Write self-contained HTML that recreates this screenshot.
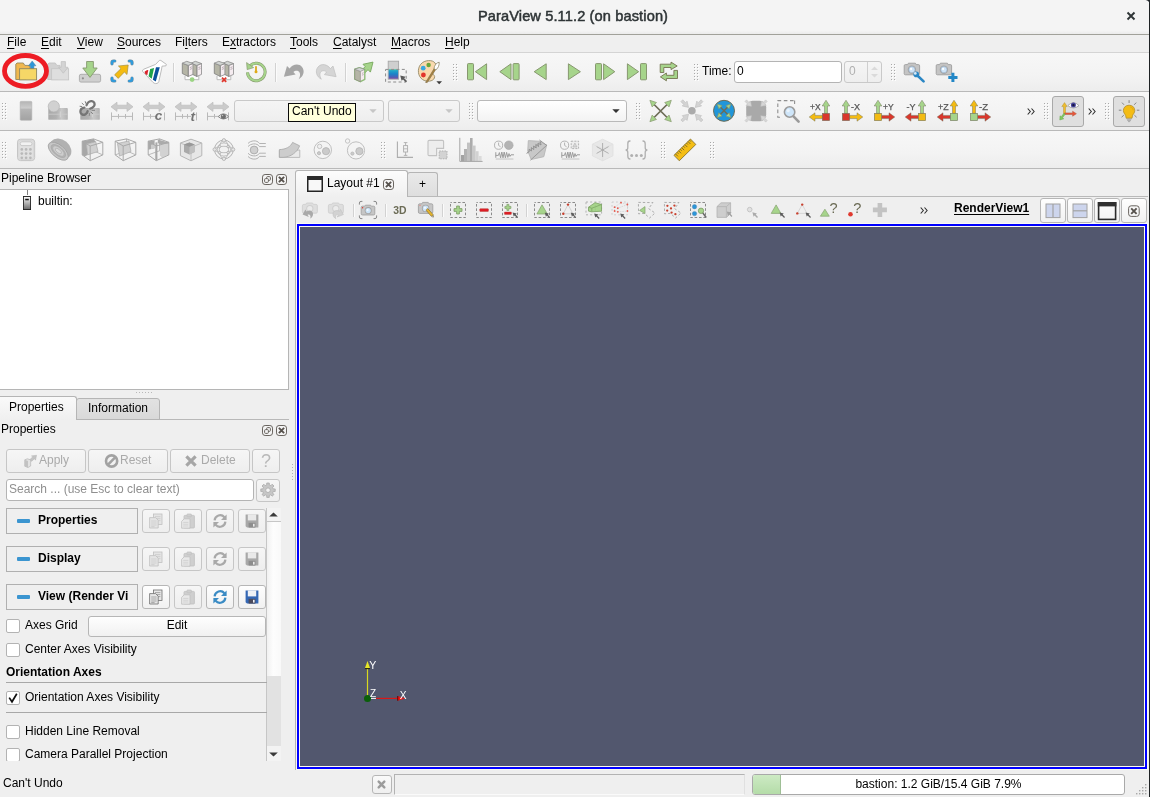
<!DOCTYPE html>
<html><head><meta charset="utf-8"><title>ParaView 5.11.2 (on bastion)</title>
<style>
*{box-sizing:border-box}
html,body{margin:0;padding:0}
body{width:1150px;height:797px;position:relative;overflow:hidden;background:#efefef;font:12px "Liberation Sans",sans-serif;color:#000}
.abs,.ic,.sep,.t,.btn,.cb,.inp,.tb,.chk,.ln{position:absolute}
.t{white-space:nowrap;line-height:14px}
.ic{overflow:visible}
.sep{width:1px;background:#d2d2d2;box-shadow:1px 0 0 #fbfbfb}
.ln{height:1px;background:#b9b9b9}
.tb{left:0;width:1149px;background:linear-gradient(#f7f7f7,#f3f3f3 60%,#ededed)}
.btn{border:1px solid #b6b6b6;border-radius:3px;background:linear-gradient(#fefefe,#f1f1f1)}
.btn.dis{border-color:#c6c6c6;background:linear-gradient(#f6f6f6,#eeeeee);color:#a9a9a9}
.cb{border:1px solid #b9b9b9;border-radius:3px;background:linear-gradient(#fdfdfd,#f0f0f0)}
.cb.dis{border-color:#c9c9c9;background:linear-gradient(#f5f5f5,#eeeeee)}
.inp{border:1px solid #b4b4b4;border-radius:3px;background:#fff}
.chk{width:14px;height:14px;border:1px solid #b3b3b3;border-radius:2px;background:#fff}
u{text-decoration:underline;text-underline-offset:2px;text-decoration-thickness:1px}
#root{position:absolute;left:0;top:0;width:1150px;height:797px;will-change:transform}
</style></head><body><div id="root">

<div class="abs" style="left:0;top:0;width:1150px;height:34px;background:linear-gradient(#f4f4f4,#f4f4f4 90%,#ebebeb)"></div>
<div class="ln" style="left:0;top:34px;width:1150px;background:#a1a19a"></div>
<div class="t" id="ttl" style="left:0;width:1146px;top:7px;text-align:center;font:14.6px/18px 'Liberation Sans',sans-serif;letter-spacing:0.12px;-webkit-text-stroke:0.5px #2e3436;color:#2e3436">ParaView 5.11.2 (on bastion)</div>
<svg class="ic" style="left:1126px;top:11px" width="10" height="10" viewBox="0 0 10 10"><path d="M1.5 1.5L8.5 8.5M8.5 1.5L1.5 8.5" stroke="#2e3436" stroke-width="1.9" fill="none"/></svg>
<div class="abs" style="left:1149px;top:0;width:1px;height:797px;background:#1e2224"></div>
<svg class="ic" style="left:1145px;top:0" width="5" height="5" viewBox="0 0 5 5"><path d="M0.6 0H5V4.6C4.6 2 3 0.4 0.6 0Z" fill="#23282b"/></svg>
<div class="abs" style="left:0;top:35px;width:1149px;height:17px;background:#efefef"></div>
<div class="t" style="left:7px;top:35px"><u>F</u>ile</div>
<div class="t" style="left:41px;top:35px"><u>E</u>dit</div>
<div class="t" style="left:77px;top:35px"><u>V</u>iew</div>
<div class="t" style="left:117px;top:35px"><u>S</u>ources</div>
<div class="t" style="left:175px;top:35px">Fi<u>l</u>ters</div>
<div class="t" style="left:222px;top:35px">E<u>x</u>tractors</div>
<div class="t" style="left:290px;top:35px"><u>T</u>ools</div>
<div class="t" style="left:333px;top:35px"><u>C</u>atalyst</div>
<div class="t" style="left:391px;top:35px"><u>M</u>acros</div>
<div class="t" style="left:445px;top:35px"><u>H</u>elp</div>
<div class="ln" style="left:0;top:52px;width:1149px;background:#d4d4d4"></div><div class="tb" style="top:53px;height:38px"></div><div class="ln" style="left:0;top:91px;width:1149px"></div>
<div class="tb" style="top:92px;height:38px"></div><div class="ln" style="left:0;top:130px;width:1149px"></div>
<div class="tb" style="top:131px;height:37px"></div><div class="ln" style="left:0;top:168px;width:1149px"></div>
<svg class="ic" style="left:15px;top:59px" width="24" height="24" viewBox="0 0 24 24" ><path d="M0.8 20.5V5.2L2 4H8.3L9.8 6.4H15V12H11V20.5Z" fill="#f0b84f" stroke="#96865c" stroke-width="0.9"/>
<path d="M17.2 2L20.9 6.8H18.9V10H15.5V6.8H13.5Z" fill="#2d96d8" stroke="#4a83a8" stroke-width="0.5"/>
<rect x="4.6" y="9.7" width="17" height="11.2" fill="#f6d767" stroke="#8d8660" stroke-width="0.9"/></svg>
<svg class="ic" style="left:47px;top:59px" width="24" height="24" viewBox="0 0 24 24" ><path d="M0.8 20.5V5.2L2 4H8.3L9.8 6.4H13V12H11V20.5Z" fill="#d2d2d2" stroke="#c4c4c4" stroke-width="0.9"/>
<rect x="4.6" y="9.7" width="17" height="11.2" fill="#dedede" stroke="#c6c6c6" stroke-width="0.9"/>
<path d="M14.2 2.6H18.4V8.3H21L16.3 14.2L11.6 8.3H14.2Z" fill="#d4d4d4" stroke="#c2c2c2" stroke-width="0.8"/></svg>
<svg class="ic" style="left:78px;top:59px" width="24" height="24" viewBox="0 0 24 24" ><rect x="1.4" y="15.3" width="21.2" height="7.8" rx="1.6" fill="#cfcfcf" stroke="#a9a9a9" stroke-width="0.9"/>
<circle cx="4.9" cy="19.3" r="1.1" fill="#8e8e8e"/>
<path d="M8.6 2.5H15.4V9H19.2L12 18.4L4.8 9H8.6Z" fill="#a6d48b" stroke="#87986f" stroke-width="0.9"/></svg>
<svg class="ic" style="left:110px;top:59px" width="24" height="24" viewBox="0 0 24 24" ><g fill="none" stroke="#6f8ea0" stroke-width="3.2" stroke-linecap="round" stroke-linejoin="round"><path d="M2 4.8V3.4Q2 2 3.4 2H4.8M19.2 2H20.6Q22 2 22 3.4V4.8M22 19.2V20.6Q22 22 20.6 22H19.2M4.8 22H3.4Q2 22 2 20.6V19.2"/></g><g fill="none" stroke="#2f9bdc" stroke-width="2.2" stroke-linecap="round" stroke-linejoin="round"><path d="M2 4.8V3.4Q2 2 3.4 2H4.8M19.2 2H20.6Q22 2 22 3.4V4.8M22 19.2V20.6Q22 22 20.6 22H19.2M4.8 22H3.4Q2 22 2 20.6V19.2"/></g>
<path d="M18.2 6L17 15.5L14.4 13L8.2 19.4L4.6 15.8L11 9.6L8.4 7Z" fill="#f4bb12" stroke="#a89040" stroke-width="0.7"/></svg>
<svg class="ic" style="left:142px;top:59px" width="24" height="24" viewBox="0 0 24 24" ><path d="M0.4 12.2Q0.2 10.8 1.8 10.2L13.6 5.4L17.4 1.4L18.8 1.4L24.4 5.4L24 6.8L20 7.2L19.6 10L16.8 22.6Q16 25 13.6 24.6Q12 24.4 10.8 23.2Z" fill="#fff" stroke="#b5b5b5" stroke-width="0.9" stroke-linejoin="round"/>
<path d="M2.6 12.7Q4.6 10.6 6.3 11L5.3 15.9L4.2 15.7Q2.6 14.6 2.6 12.7Z" fill="#d8232a"/>
<path d="M8.2 10L12.1 9L9.7 19.8L6.5 17.3Z" fill="#1fa24a"/>
<path d="M14 8.3H17.8L13.8 22.6L10.8 20.7Z" fill="#0b509c"/></svg>
<div class="sep" style="left:173px;top:63px;height:19px"></div>
<svg class="ic" style="left:180px;top:59px" width="24" height="24" viewBox="0 0 24 24" ><path d="M5 17V20.7H18.8V17" fill="#fdfdfd" stroke="#b5b5b5" stroke-width="0.9"/><path d="M16.8 6.4L21.5 4.5V15.4L16.8 17.5Z" fill="#f5ecf0" stroke="#8a8a8a" stroke-width="0.8" stroke-linejoin="round"/><path d="M10.9 4.2L16.8 6.4V17.5L10.9 14.5Z" fill="#b5b5a6" stroke="#7c7c7c" stroke-width="0.8" stroke-linejoin="round"/><path d="M10.9 4.2L15.4 2.3L21.5 4.5L16.8 6.4Z" fill="#d3d6d3" stroke="#8a8a8a" stroke-width="0.8" stroke-linejoin="round"/><path d="M18.5 8.6L20.5 7.8M18.5 10.4L20.5 9.6" stroke="#a89aa2" stroke-width="0.8"/><path d="M8.2 6.4L12.9 4.5V15.4L8.2 17.5Z" fill="#f5ecf0" stroke="#8a8a8a" stroke-width="0.8" stroke-linejoin="round"/><path d="M2.3 4.2L8.2 6.4V17.5L2.3 14.5Z" fill="#b5b5a6" stroke="#7c7c7c" stroke-width="0.8" stroke-linejoin="round"/><path d="M2.3 4.2L6.8 2.3L12.9 4.5L8.2 6.4Z" fill="#d3d6d3" stroke="#8a8a8a" stroke-width="0.8" stroke-linejoin="round"/><path d="M9.9 8.6L11.9 7.8M9.9 10.4L11.9 9.6" stroke="#a89aa2" stroke-width="0.8"/><circle cx="12.1" cy="20.6" r="2.4" fill="#9bd484"/></svg>
<svg class="ic" style="left:212px;top:59px" width="24" height="24" viewBox="0 0 24 24" ><path d="M5 17V20.7H18.8V17" fill="#fdfdfd" stroke="#b5b5b5" stroke-width="0.9"/><path d="M16.8 6.4L21.5 4.5V15.4L16.8 17.5Z" fill="#f5ecf0" stroke="#8a8a8a" stroke-width="0.8" stroke-linejoin="round"/><path d="M10.9 4.2L16.8 6.4V17.5L10.9 14.5Z" fill="#b5b5a6" stroke="#7c7c7c" stroke-width="0.8" stroke-linejoin="round"/><path d="M10.9 4.2L15.4 2.3L21.5 4.5L16.8 6.4Z" fill="#d3d6d3" stroke="#8a8a8a" stroke-width="0.8" stroke-linejoin="round"/><path d="M18.5 8.6L20.5 7.8M18.5 10.4L20.5 9.6" stroke="#a89aa2" stroke-width="0.8"/><path d="M8.2 6.4L12.9 4.5V15.4L8.2 17.5Z" fill="#f5ecf0" stroke="#8a8a8a" stroke-width="0.8" stroke-linejoin="round"/><path d="M2.3 4.2L8.2 6.4V17.5L2.3 14.5Z" fill="#b5b5a6" stroke="#7c7c7c" stroke-width="0.8" stroke-linejoin="round"/><path d="M2.3 4.2L6.8 2.3L12.9 4.5L8.2 6.4Z" fill="#d3d6d3" stroke="#8a8a8a" stroke-width="0.8" stroke-linejoin="round"/><path d="M9.9 8.6L11.9 7.8M9.9 10.4L11.9 9.6" stroke="#a89aa2" stroke-width="0.8"/><path d="M10 18.6L14.2 22.8M14.2 18.6L10 22.8" stroke="#e0392f" stroke-width="1.8"/></svg>
<svg class="ic" style="left:244px;top:59px" width="24" height="24" viewBox="0 0 24 24" ><path d="M5.9 6.9A8.8 8.8 0 1 1 3.5 13.4" fill="none" stroke="#87986f" stroke-width="3"/><path d="M5.9 6.9A8.8 8.8 0 1 1 3.5 13.4" fill="none" stroke="#a6d48b" stroke-width="2"/>
<path d="M2.6 3.6L3.2 10.6L9.6 8.6Z" fill="#a6d48b" stroke="#87986f" stroke-width="0.7"/>
<path d="M12 7.8V12.2" stroke="#d9a514" stroke-width="1.7" stroke-linecap="round"/><circle cx="12" cy="12.8" r="1.5" fill="#e0aa18"/></svg>
<div class="sep" style="left:275px;top:63px;height:19px"></div>
<svg class="ic" style="left:282px;top:59px" width="24" height="24" viewBox="0 0 24 24" ><path d="M1.9 17.7L5 7L7.6 9.6C10.5 5.5 16.5 3.8 20 8C23.2 12 21.6 17.6 16.7 20.2C18.6 17 18.6 13.6 16.4 12.2C14.8 11.2 12.6 11.8 11.4 13L13.6 15.6Z" fill="#a6a6a6"/></svg>
<svg class="ic" style="left:314px;top:59px" width="24" height="24" viewBox="0 0 24 24" ><g transform="translate(24 0) scale(-1 1)"><path d="M1.9 17.7L5 7L7.6 9.6C10.5 5.5 16.5 3.8 20 8C23.2 12 21.6 17.6 16.7 20.2C18.6 17 18.6 13.6 16.4 12.2C14.8 11.2 12.6 11.8 11.4 13L13.6 15.6Z" fill="#d5d5d5" stroke="#bfbfbf" stroke-width="0.7"/></g></svg>
<div class="sep" style="left:345px;top:63px;height:19px"></div>
<svg class="ic" style="left:352px;top:59px" width="24" height="24" viewBox="0 0 24 24" ><path d="M11 5.3L21 3.1L18.4 13.1L16 10.6L12.6 14.2L9.6 11.2L13.2 7.6Z" fill="#a6d48b" stroke="#7fae66" stroke-width="1" stroke-linejoin="round"/>
<path d="M2.8 10.2L7.4 8.7L12.8 10.4V20.4L8.4 22.7L2.8 20.2Z" fill="#f4eaef" stroke="#8fbc78" stroke-width="1.4" stroke-linejoin="round"/>
<path d="M2.8 10.2L8.4 12.4V22.7L2.8 20.2Z" fill="#b5b5a6" stroke="#86867c" stroke-width="0.6"/><path d="M2.8 10.2L7.4 8.7L12.8 10.4L8.4 12.4Z" fill="#d3d6d3" stroke="#8a8a8a" stroke-width="0.6"/>
<path d="M10 14.4L11.6 13.7M10 16.2L11.6 15.5" stroke="#a89aa2" stroke-width="0.7"/></svg>
<svg class="ic" style="left:384px;top:59px" width="24" height="24" viewBox="0 0 24 24" ><defs><linearGradient id="cbg" x1="0" y1="0" x2="0" y2="1"><stop offset="0" stop-color="#58c9a8"/><stop offset="0.15" stop-color="#22a6c8"/><stop offset="0.5" stop-color="#1b83c8"/><stop offset="0.8" stop-color="#4a62b8"/><stop offset="1" stop-color="#7a4fa0"/></linearGradient></defs>
<rect x="4.2" y="2.2" width="10.4" height="18" fill="#cfcfcf" stroke="#a7a7a7" stroke-width="0.9"/>
<rect x="4.7" y="10.2" width="9.4" height="9.6" fill="url(#cbg)"/>
<path d="M1.6 10.4H22.2V23H1.6Z" fill="none" stroke="#8c8c8c" stroke-width="1" stroke-dasharray="3 2.4"/>
<path d="M16.2 16.4L21.6 17.8L20.2 19.2L23 22L21.8 23.2L19 20.4L17.6 21.8Z" fill="#5a5a5a"/></svg>
<svg class="ic" style="left:416px;top:59px" width="24" height="24" viewBox="0 0 24 24" ><path d="M12.6 1.6C18.4 1.2 21.4 5.4 19.6 9.6C18.4 12 16.6 12.4 16.8 14.4C17.2 16.2 19.4 16.4 18.4 19C17 22.6 10.6 23.2 6.6 20.6C1.6 17.2 1.2 9.8 4.6 5.4C6.6 2.8 9.6 1.8 12.6 1.6Z" fill="#f9d9ad" stroke="#958a68" stroke-width="0.9"/>
<circle cx="7.2" cy="9.2" r="2.4" fill="#3ba7e0"/><circle cx="12.6" cy="6" r="2.2" fill="#6aa63a"/><circle cx="7.4" cy="16" r="2.4" fill="#e3342c"/>
<path d="M9.6 23.4L18.6 8.8L20.2 9.8L11.2 23.6Z" fill="#a8823e" stroke="#7a6a44" stroke-width="0.6"/>
<path d="M18 9.6C18.2 6.4 20.6 3.6 23.2 3.2C23.4 6 22.2 9.6 19.8 10.8Z" fill="#fff" stroke="#8d8668" stroke-width="0.8"/>
<path d="M20.4 22.2H26L23.2 25.2Z" fill="#3a3a3a"/></svg>
<svg class="ic" style="left:453px;top:64px" width="6" height="18"><rect x="1" y="1" width="1" height="1" fill="#ffffff"/><rect x="0" y="0" width="1" height="1" fill="#a9a9a9"/><rect x="4" y="1" width="1" height="1" fill="#ffffff"/><rect x="3" y="0" width="1" height="1" fill="#a9a9a9"/><rect x="1" y="4" width="1" height="1" fill="#ffffff"/><rect x="0" y="3" width="1" height="1" fill="#a9a9a9"/><rect x="4" y="4" width="1" height="1" fill="#ffffff"/><rect x="3" y="3" width="1" height="1" fill="#a9a9a9"/><rect x="1" y="7" width="1" height="1" fill="#ffffff"/><rect x="0" y="6" width="1" height="1" fill="#a9a9a9"/><rect x="4" y="7" width="1" height="1" fill="#ffffff"/><rect x="3" y="6" width="1" height="1" fill="#a9a9a9"/><rect x="1" y="10" width="1" height="1" fill="#ffffff"/><rect x="0" y="9" width="1" height="1" fill="#a9a9a9"/><rect x="4" y="10" width="1" height="1" fill="#ffffff"/><rect x="3" y="9" width="1" height="1" fill="#a9a9a9"/><rect x="1" y="13" width="1" height="1" fill="#ffffff"/><rect x="0" y="12" width="1" height="1" fill="#a9a9a9"/><rect x="4" y="13" width="1" height="1" fill="#ffffff"/><rect x="3" y="12" width="1" height="1" fill="#a9a9a9"/><rect x="1" y="16" width="1" height="1" fill="#ffffff"/><rect x="0" y="15" width="1" height="1" fill="#a9a9a9"/><rect x="4" y="16" width="1" height="1" fill="#ffffff"/><rect x="3" y="15" width="1" height="1" fill="#a9a9a9"/></svg>
<svg class="ic" style="left:465px;top:59px" width="24" height="24" viewBox="0 0 24 24" ><rect x="2.5" y="4.6" width="6" height="16.2" rx="0.8" fill="#a6d48b" stroke="#87986f" stroke-width="1"/><path d="M21.6 4.8V20.6L10.4 12.7Z" fill="#a6d48b" stroke="#87986f" stroke-width="1" stroke-linejoin="round"/></svg>
<svg class="ic" style="left:497px;top:59px" width="24" height="24" viewBox="0 0 24 24" ><g transform="translate(1.6 0)"><rect x="14.5" y="4.6" width="6" height="16.2" rx="0.8" fill="#a6d48b" stroke="#87986f" stroke-width="1"/><path d="M12.4 4.8V20.6L1.2 12.7Z" fill="#a6d48b" stroke="#87986f" stroke-width="1" stroke-linejoin="round"/></g></svg>
<svg class="ic" style="left:529px;top:59px" width="24" height="24" viewBox="0 0 24 24" ><g transform="translate(-1.2 0)"><path d="M18.4 4.8V20.6L6.4 12.7Z" fill="#a6d48b" stroke="#87986f" stroke-width="1" stroke-linejoin="round"/></g></svg>
<svg class="ic" style="left:561px;top:59px" width="24" height="24" viewBox="0 0 24 24" ><g transform="translate(0.8 0)"><path d="M6.6 4.8V20.6L18.6 12.7Z" fill="#a6d48b" stroke="#87986f" stroke-width="1" stroke-linejoin="round"/></g></svg>
<svg class="ic" style="left:593px;top:59px" width="24" height="24" viewBox="0 0 24 24" ><g transform="translate(-1 0)"><rect x="3.5" y="4.6" width="6" height="16.2" rx="0.8" fill="#a6d48b" stroke="#87986f" stroke-width="1"/><path d="M11.6 4.8V20.6L22.8 12.7Z" fill="#a6d48b" stroke="#87986f" stroke-width="1" stroke-linejoin="round"/></g></svg>
<svg class="ic" style="left:625px;top:59px" width="24" height="24" viewBox="0 0 24 24" ><rect x="15.5" y="4.6" width="6" height="16.2" rx="0.8" fill="#a6d48b" stroke="#87986f" stroke-width="1"/><path d="M2.4 4.8V20.6L13.6 12.7Z" fill="#a6d48b" stroke="#87986f" stroke-width="1" stroke-linejoin="round"/></svg>
<svg class="ic" style="left:657px;top:59px" width="24" height="24" viewBox="0 0 24 24" ><path d="M3.2 13.5V5.2H14V3.1L20.2 7L14 10.6V8.5H6.8V13.5Z" fill="#a6d48b" stroke="#74744f" stroke-width="0.9" stroke-linejoin="round"/>
<path d="M20.5 11.4V19.5H9.4V21.8L3.4 17.9L9.4 14V16.3H16.9V11.4Z" fill="#a6d48b" stroke="#74744f" stroke-width="0.9" stroke-linejoin="round"/></svg>
<svg class="ic" style="left:694px;top:64px" width="6" height="18"><rect x="1" y="1" width="1" height="1" fill="#ffffff"/><rect x="0" y="0" width="1" height="1" fill="#a9a9a9"/><rect x="4" y="1" width="1" height="1" fill="#ffffff"/><rect x="3" y="0" width="1" height="1" fill="#a9a9a9"/><rect x="1" y="4" width="1" height="1" fill="#ffffff"/><rect x="0" y="3" width="1" height="1" fill="#a9a9a9"/><rect x="4" y="4" width="1" height="1" fill="#ffffff"/><rect x="3" y="3" width="1" height="1" fill="#a9a9a9"/><rect x="1" y="7" width="1" height="1" fill="#ffffff"/><rect x="0" y="6" width="1" height="1" fill="#a9a9a9"/><rect x="4" y="7" width="1" height="1" fill="#ffffff"/><rect x="3" y="6" width="1" height="1" fill="#a9a9a9"/><rect x="1" y="10" width="1" height="1" fill="#ffffff"/><rect x="0" y="9" width="1" height="1" fill="#a9a9a9"/><rect x="4" y="10" width="1" height="1" fill="#ffffff"/><rect x="3" y="9" width="1" height="1" fill="#a9a9a9"/><rect x="1" y="13" width="1" height="1" fill="#ffffff"/><rect x="0" y="12" width="1" height="1" fill="#a9a9a9"/><rect x="4" y="13" width="1" height="1" fill="#ffffff"/><rect x="3" y="12" width="1" height="1" fill="#a9a9a9"/><rect x="1" y="16" width="1" height="1" fill="#ffffff"/><rect x="0" y="15" width="1" height="1" fill="#a9a9a9"/><rect x="4" y="16" width="1" height="1" fill="#ffffff"/><rect x="3" y="15" width="1" height="1" fill="#a9a9a9"/></svg>
<div class="t" style="left:702px;top:64px">Time:</div>
<div class="inp" style="left:734px;top:61px;width:108px;height:22px"></div><div class="t" style="left:737px;top:64px">0</div>
<div class="cb dis" style="left:844px;top:61px;width:38px;height:22px"></div><div class="abs" style="left:867px;top:62px;width:1px;height:20px;background:#cfcfcf"></div><div class="t" style="left:849px;top:64px;color:#b0b0b0">0</div>
<svg class="ic" style="left:870px;top:65px" width="9" height="14" viewBox="0 0 9 14"><path d="M1 5L4.5 1.6L8 5ZM1 9L4.5 12.4L8 9Z" fill="#dadada"/></svg>
<svg class="ic" style="left:891px;top:64px" width="6" height="18"><rect x="1" y="1" width="1" height="1" fill="#ffffff"/><rect x="0" y="0" width="1" height="1" fill="#a9a9a9"/><rect x="4" y="1" width="1" height="1" fill="#ffffff"/><rect x="3" y="0" width="1" height="1" fill="#a9a9a9"/><rect x="1" y="4" width="1" height="1" fill="#ffffff"/><rect x="0" y="3" width="1" height="1" fill="#a9a9a9"/><rect x="4" y="4" width="1" height="1" fill="#ffffff"/><rect x="3" y="3" width="1" height="1" fill="#a9a9a9"/><rect x="1" y="7" width="1" height="1" fill="#ffffff"/><rect x="0" y="6" width="1" height="1" fill="#a9a9a9"/><rect x="4" y="7" width="1" height="1" fill="#ffffff"/><rect x="3" y="6" width="1" height="1" fill="#a9a9a9"/><rect x="1" y="10" width="1" height="1" fill="#ffffff"/><rect x="0" y="9" width="1" height="1" fill="#a9a9a9"/><rect x="4" y="10" width="1" height="1" fill="#ffffff"/><rect x="3" y="9" width="1" height="1" fill="#a9a9a9"/><rect x="1" y="13" width="1" height="1" fill="#ffffff"/><rect x="0" y="12" width="1" height="1" fill="#a9a9a9"/><rect x="4" y="13" width="1" height="1" fill="#ffffff"/><rect x="3" y="12" width="1" height="1" fill="#a9a9a9"/><rect x="1" y="16" width="1" height="1" fill="#ffffff"/><rect x="0" y="15" width="1" height="1" fill="#a9a9a9"/><rect x="4" y="16" width="1" height="1" fill="#ffffff"/><rect x="3" y="15" width="1" height="1" fill="#a9a9a9"/></svg>
<svg class="ic" style="left:902px;top:59px" width="24" height="24" viewBox="0 0 24 24" ><path d="M6.4 4.2H13.4L14.2 5.6H16.4Q17.6 5.6 17.6 6.8V14.6Q17.6 15.8 16.4 15.8H3.4Q2.2 15.8 2.2 14.6V6.8Q2.2 5.6 3.4 5.6H5.6Z" fill="#c4c4c4" stroke="#9d9d9d" stroke-width="0.9"/>
<circle cx="9.9" cy="10.7" r="4.2" fill="#a6a6a6"/><circle cx="9.9" cy="10.7" r="3.1" fill="#cfe4f7" stroke="#8ea9c4" stroke-width="0.5"/><circle cx="9.1" cy="9.9" r="1.1" fill="#fff"/><path d="M14.6 15.8L21.6 22.4" stroke="#2a86c4" stroke-width="2.6" stroke-linecap="round"/><circle cx="14.2" cy="15.4" r="2.8" fill="#2a86c4"/><circle cx="13.3" cy="14.4" r="1.4" fill="#d6e8f7"/></svg>
<svg class="ic" style="left:934px;top:59px" width="24" height="24" viewBox="0 0 24 24" ><path d="M6.4 4.2H13.4L14.2 5.6H16.4Q17.6 5.6 17.6 6.8V14.6Q17.6 15.8 16.4 15.8H3.4Q2.2 15.8 2.2 14.6V6.8Q2.2 5.6 3.4 5.6H5.6Z" fill="#c4c4c4" stroke="#9d9d9d" stroke-width="0.9"/>
<circle cx="9.9" cy="10.7" r="4.2" fill="#a6a6a6"/><circle cx="9.9" cy="10.7" r="3.1" fill="#cfe4f7" stroke="#8ea9c4" stroke-width="0.5"/><circle cx="9.1" cy="9.9" r="1.1" fill="#fff"/><path d="M18.9 13.8V23M14.3 18.4H23.5" stroke="#2387c6" stroke-width="3"/></svg>
<svg class="ic" style="left:0;top:50px" width="52" height="42" viewBox="0 0 52 42"><ellipse cx="25.5" cy="20.9" rx="21" ry="15.4" fill="none" stroke="#ed1c24" stroke-width="4.8"/></svg>
<svg class="ic" style="left:2px;top:103px" width="6" height="18"><rect x="1" y="1" width="1" height="1" fill="#ffffff"/><rect x="0" y="0" width="1" height="1" fill="#a9a9a9"/><rect x="4" y="1" width="1" height="1" fill="#ffffff"/><rect x="3" y="0" width="1" height="1" fill="#a9a9a9"/><rect x="1" y="4" width="1" height="1" fill="#ffffff"/><rect x="0" y="3" width="1" height="1" fill="#a9a9a9"/><rect x="4" y="4" width="1" height="1" fill="#ffffff"/><rect x="3" y="3" width="1" height="1" fill="#a9a9a9"/><rect x="1" y="7" width="1" height="1" fill="#ffffff"/><rect x="0" y="6" width="1" height="1" fill="#a9a9a9"/><rect x="4" y="7" width="1" height="1" fill="#ffffff"/><rect x="3" y="6" width="1" height="1" fill="#a9a9a9"/><rect x="1" y="10" width="1" height="1" fill="#ffffff"/><rect x="0" y="9" width="1" height="1" fill="#a9a9a9"/><rect x="4" y="10" width="1" height="1" fill="#ffffff"/><rect x="3" y="9" width="1" height="1" fill="#a9a9a9"/><rect x="1" y="13" width="1" height="1" fill="#ffffff"/><rect x="0" y="12" width="1" height="1" fill="#a9a9a9"/><rect x="4" y="13" width="1" height="1" fill="#ffffff"/><rect x="3" y="12" width="1" height="1" fill="#a9a9a9"/><rect x="1" y="16" width="1" height="1" fill="#ffffff"/><rect x="0" y="15" width="1" height="1" fill="#a9a9a9"/><rect x="4" y="16" width="1" height="1" fill="#ffffff"/><rect x="3" y="15" width="1" height="1" fill="#a9a9a9"/></svg>
<svg class="ic" style="left:14px;top:99px" width="24" height="24" viewBox="0 0 24 24" ><defs><linearGradient id="lg1" x1="0" y1="0" x2="0" y2="1"><stop offset="0" stop-color="#b4b4b4"/><stop offset="0.36" stop-color="#cdcdcd"/><stop offset="0.4" stop-color="#b6b6b6"/><stop offset="1" stop-color="#a2a2a2"/></linearGradient></defs>
<rect x="6.2" y="2.4" width="11.6" height="18.8" rx="0.8" fill="url(#lg1)" stroke="#b0b0b0" stroke-width="0.6"/></svg>
<svg class="ic" style="left:46px;top:99px" width="24" height="24" viewBox="0 0 24 24" ><defs><linearGradient id="lg2" x1="0" y1="0" x2="1" y2="0"><stop offset="0" stop-color="#a9a9a9"/><stop offset="0.4" stop-color="#b0b0b0"/><stop offset="0.68" stop-color="#c8c8c8"/><stop offset="1" stop-color="#b2b2b2"/></linearGradient></defs>
<rect x="2.3" y="9" width="19.5" height="11.8" rx="0.9" fill="url(#lg2)"/><path d="M2.3 15.2H21.8" stroke="#c9c9c9" stroke-width="0.9"/><path d="M14.4 12.4V18.4" stroke="#d2d2d2" stroke-width="1.3"/><circle cx="7.8" cy="7.4" r="5.6" fill="#d1d1d1" stroke="#b7b7b7" stroke-width="0.8"/></svg>
<svg class="ic" style="left:78px;top:99px" width="24" height="24" viewBox="0 0 24 24" ><defs><linearGradient id="lg2" x1="0" y1="0" x2="1" y2="0"><stop offset="0" stop-color="#a9a9a9"/><stop offset="0.4" stop-color="#b0b0b0"/><stop offset="0.68" stop-color="#c8c8c8"/><stop offset="1" stop-color="#b2b2b2"/></linearGradient></defs>
<rect x="2.3" y="9" width="19.5" height="11.8" rx="0.9" fill="url(#lg2)"/><path d="M2.3 15.2H21.8" stroke="#c9c9c9" stroke-width="0.9"/><path d="M14.4 12.4V18.4" stroke="#d2d2d2" stroke-width="1.3"/><g fill="none" stroke="#757575" stroke-width="2.3" stroke-linecap="round"><path d="M8.6 6.2C9.6 3.4 12 1.8 14 2.2C16.6 2.6 17.2 5.4 16 7.2C15 8.6 13.6 9.4 12.2 9.6"/><path d="M6.4 8.6C4 8.6 2.2 10.6 2.4 12.8C2.6 15.2 5.2 16.4 7.2 15.4C8.6 14.6 9.4 13.4 9.6 12.2"/></g>
<path d="M7.3 2.6L7.7 4.2M4.1 4.3L5.5 5.5M2 7.3L3.8 7.5M14.1 11.3H16.6M13.1 13.3L14.7 14.5M11.3 14.5V16.3" stroke="#757575" stroke-width="0.9" stroke-linecap="round"/></svg>
<svg class="ic" style="left:110px;top:99px" width="24" height="24" viewBox="0 0 24 24" ><path d="M1 7.8L7 3.2V6.2H17V3.2L23 7.8L17 12.4V9.6H7V12.4Z" fill="#cbcbcb" stroke="#bdbdbd" stroke-width="0.7"/><path d="M1.5 13.4V21.4M22.5 13.4V21.4M1.5 17.4H22.5M8.5 15V19.6M15.5 15V19.6" stroke="#b9b9b9" stroke-width="1"/></svg>
<svg class="ic" style="left:142px;top:99px" width="24" height="24" viewBox="0 0 24 24" ><path d="M1 7.8L7 3.2V6.2H17V3.2L23 7.8L17 12.4V9.6H7V12.4Z" fill="#cbcbcb" stroke="#bdbdbd" stroke-width="0.7"/><path d="M1.5 13.4V21.4M22.5 13.4V21.4M1.5 17.4H14M8.5 15V19.6" stroke="#b9b9b9" stroke-width="1"/><text x="12.8" y="21.4" font-family="Liberation Sans,sans-serif" font-weight="bold" font-style="italic" font-size="13.5" fill="#747474">c</text></svg>
<svg class="ic" style="left:174px;top:99px" width="24" height="24" viewBox="0 0 24 24" ><path d="M1 7.8L7 3.2V6.2H17V3.2L23 7.8L17 12.4V9.6H7V12.4Z" fill="#cbcbcb" stroke="#bdbdbd" stroke-width="0.7"/><path d="M1.5 13.4V21.4M22.5 13.4V21.4M1.5 17.4H17M8.5 15V19.6M13.5 15V19.6" stroke="#b9b9b9" stroke-width="1"/><text x="16.4" y="21.6" font-family="Liberation Sans,sans-serif" font-weight="bold" font-style="italic" font-size="13.5" fill="#747474">t</text></svg>
<svg class="ic" style="left:206px;top:99px" width="24" height="24" viewBox="0 0 24 24" ><path d="M1 7.8L7 3.2V6.2H17V3.2L23 7.8L17 12.4V9.6H7V12.4Z" fill="#cbcbcb" stroke="#bdbdbd" stroke-width="0.7"/><path d="M1.5 13.4V21.4M22.5 13.4V21.4M1.5 17.4H13M8.5 15V19.6" stroke="#b9b9b9" stroke-width="1"/><path d="M12.2 17.6Q17.4 12 22.6 17.6Q17.4 22.4 12.2 17.6Z" fill="#e4e4e4" stroke="#8a8a8a" stroke-width="1"/><circle cx="17.4" cy="17.4" r="2.5" fill="#6e6e6e"/><circle cx="16.6" cy="16.6" r="0.7" fill="#d0d0d0"/></svg>
<div class="cb dis" style="left:234px;top:100px;width:150px;height:22px"></div>
<svg class="ic" style="left:368.5px;top:109px" width="8" height="4" viewBox="0 0 8 4"><path d="M0.3 0.2H7.7L4 4Z" fill="#c6c6c6"/></svg>
<div class="cb dis" style="left:388px;top:100px;width:72px;height:22px"></div>
<svg class="ic" style="left:444.5px;top:109px" width="8" height="4" viewBox="0 0 8 4"><path d="M0.3 0.2H7.7L4 4Z" fill="#c6c6c6"/></svg>
<svg class="ic" style="left:469px;top:103px" width="6" height="18"><rect x="1" y="1" width="1" height="1" fill="#ffffff"/><rect x="0" y="0" width="1" height="1" fill="#a9a9a9"/><rect x="4" y="1" width="1" height="1" fill="#ffffff"/><rect x="3" y="0" width="1" height="1" fill="#a9a9a9"/><rect x="1" y="4" width="1" height="1" fill="#ffffff"/><rect x="0" y="3" width="1" height="1" fill="#a9a9a9"/><rect x="4" y="4" width="1" height="1" fill="#ffffff"/><rect x="3" y="3" width="1" height="1" fill="#a9a9a9"/><rect x="1" y="7" width="1" height="1" fill="#ffffff"/><rect x="0" y="6" width="1" height="1" fill="#a9a9a9"/><rect x="4" y="7" width="1" height="1" fill="#ffffff"/><rect x="3" y="6" width="1" height="1" fill="#a9a9a9"/><rect x="1" y="10" width="1" height="1" fill="#ffffff"/><rect x="0" y="9" width="1" height="1" fill="#a9a9a9"/><rect x="4" y="10" width="1" height="1" fill="#ffffff"/><rect x="3" y="9" width="1" height="1" fill="#a9a9a9"/><rect x="1" y="13" width="1" height="1" fill="#ffffff"/><rect x="0" y="12" width="1" height="1" fill="#a9a9a9"/><rect x="4" y="13" width="1" height="1" fill="#ffffff"/><rect x="3" y="12" width="1" height="1" fill="#a9a9a9"/><rect x="1" y="16" width="1" height="1" fill="#ffffff"/><rect x="0" y="15" width="1" height="1" fill="#a9a9a9"/><rect x="4" y="16" width="1" height="1" fill="#ffffff"/><rect x="3" y="15" width="1" height="1" fill="#a9a9a9"/></svg>
<div class="cb" style="left:477px;top:100px;width:150px;height:22px;background:linear-gradient(#ffffff,#f3f3f3)"></div>
<svg class="ic" style="left:611.5px;top:109px" width="8" height="4" viewBox="0 0 8 4"><path d="M0.3 0.2H7.7L4 4Z" fill="#333"/></svg>
<div class="abs" style="left:288px;top:103px;width:68px;height:19px;background:#ffffdc;border:1px solid #0a0a0a"></div><div class="t" style="left:292px;top:104px">Can't Undo</div>
<svg class="ic" style="left:636px;top:103px" width="6" height="18"><rect x="1" y="1" width="1" height="1" fill="#ffffff"/><rect x="0" y="0" width="1" height="1" fill="#a9a9a9"/><rect x="4" y="1" width="1" height="1" fill="#ffffff"/><rect x="3" y="0" width="1" height="1" fill="#a9a9a9"/><rect x="1" y="4" width="1" height="1" fill="#ffffff"/><rect x="0" y="3" width="1" height="1" fill="#a9a9a9"/><rect x="4" y="4" width="1" height="1" fill="#ffffff"/><rect x="3" y="3" width="1" height="1" fill="#a9a9a9"/><rect x="1" y="7" width="1" height="1" fill="#ffffff"/><rect x="0" y="6" width="1" height="1" fill="#a9a9a9"/><rect x="4" y="7" width="1" height="1" fill="#ffffff"/><rect x="3" y="6" width="1" height="1" fill="#a9a9a9"/><rect x="1" y="10" width="1" height="1" fill="#ffffff"/><rect x="0" y="9" width="1" height="1" fill="#a9a9a9"/><rect x="4" y="10" width="1" height="1" fill="#ffffff"/><rect x="3" y="9" width="1" height="1" fill="#a9a9a9"/><rect x="1" y="13" width="1" height="1" fill="#ffffff"/><rect x="0" y="12" width="1" height="1" fill="#a9a9a9"/><rect x="4" y="13" width="1" height="1" fill="#ffffff"/><rect x="3" y="12" width="1" height="1" fill="#a9a9a9"/><rect x="1" y="16" width="1" height="1" fill="#ffffff"/><rect x="0" y="15" width="1" height="1" fill="#a9a9a9"/><rect x="4" y="16" width="1" height="1" fill="#ffffff"/><rect x="3" y="15" width="1" height="1" fill="#a9a9a9"/></svg>
<svg class="ic" style="left:648px;top:99px" width="24" height="24" viewBox="0 0 24 24" ><g transform="translate(0.6 0)"><path d="M4 4L20 20M20 4L4 20" stroke="#6c6c56" stroke-width="1.7"/><path d="M1.3 1.3L7.8999999999999995 3.5440000000000005L3.5440000000000005 7.8999999999999995Z" fill="#a6d48b" stroke="#87986f" stroke-width="0.7" stroke-linejoin="round"/><path d="M22.7 1.3L16.1 3.5440000000000005L20.456 7.8999999999999995Z" fill="#a6d48b" stroke="#87986f" stroke-width="0.7" stroke-linejoin="round"/><path d="M1.3 22.7L7.8999999999999995 20.456L3.5440000000000005 16.1Z" fill="#a6d48b" stroke="#87986f" stroke-width="0.7" stroke-linejoin="round"/><path d="M22.7 22.7L16.1 20.456L20.456 16.1Z" fill="#a6d48b" stroke="#87986f" stroke-width="0.7" stroke-linejoin="round"/></g></svg>
<svg class="ic" style="left:680px;top:99px" width="24" height="24" viewBox="0 0 24 24" ><g transform="translate(-0.1 -0.2)"><circle cx="12" cy="12" r="3.8" fill="#ababab"/><g transform="translate(6.3 6.3) rotate(45)"><path d="M3.3 0L-2.2 -3.4V-1.3H-6.2V1.3H-2.2V3.4Z" fill="#d3d3d3" stroke="#bebebe" stroke-width="0.6" stroke-linejoin="round"/></g><g transform="translate(17.7 6.3) rotate(135)"><path d="M3.3 0L-2.2 -3.4V-1.3H-6.2V1.3H-2.2V3.4Z" fill="#d3d3d3" stroke="#bebebe" stroke-width="0.6" stroke-linejoin="round"/></g><g transform="translate(17.7 17.7) rotate(225)"><path d="M3.3 0L-2.2 -3.4V-1.3H-6.2V1.3H-2.2V3.4Z" fill="#d3d3d3" stroke="#bebebe" stroke-width="0.6" stroke-linejoin="round"/></g><g transform="translate(6.3 17.7) rotate(315)"><path d="M3.3 0L-2.2 -3.4V-1.3H-6.2V1.3H-2.2V3.4Z" fill="#d3d3d3" stroke="#bebebe" stroke-width="0.6" stroke-linejoin="round"/></g></g></svg>
<svg class="ic" style="left:712px;top:99px" width="24" height="24" viewBox="0 0 24 24" ><g transform="translate(0 -0.2)"><circle cx="12" cy="12" r="10.5" fill="#2196d9" stroke="#6c6c56" stroke-width="1"/><path d="M7.5 7.5L16.5 16.5M16.5 7.5L7.5 16.5" stroke="#6c6c56" stroke-width="1.4"/><path d="M5.2 5.2L10.0 6.832000000000001L6.832000000000001 10.0Z" fill="#a6d48b" stroke="#87986f" stroke-width="0.7" stroke-linejoin="round"/><path d="M18.8 5.2L14.0 6.832000000000001L17.168 10.0Z" fill="#a6d48b" stroke="#87986f" stroke-width="0.7" stroke-linejoin="round"/><path d="M5.2 18.8L10.0 17.168L6.832000000000001 14.0Z" fill="#a6d48b" stroke="#87986f" stroke-width="0.7" stroke-linejoin="round"/><path d="M18.8 18.8L14.0 17.168L17.168 14.0Z" fill="#a6d48b" stroke="#87986f" stroke-width="0.7" stroke-linejoin="round"/></g></svg>
<svg class="ic" style="left:744px;top:99px" width="24" height="24" viewBox="0 0 24 24" ><g transform="translate(0.1 0)"><rect x="2.1" y="1.8" width="20" height="20.4" rx="6.4" fill="#a9a9a9"/><g transform="translate(4.9 4.9) rotate(45)"><path d="M3.4 0L-1 -3.2V-1.1H-4.6V1.1H-1V3.2Z" fill="#d6d6d6" stroke="#c4c4c4" stroke-width="0.5" stroke-linejoin="round"/></g><g transform="translate(19.1 4.9) rotate(135)"><path d="M3.4 0L-1 -3.2V-1.1H-4.6V1.1H-1V3.2Z" fill="#d6d6d6" stroke="#c4c4c4" stroke-width="0.5" stroke-linejoin="round"/></g><g transform="translate(19.1 19.1) rotate(225)"><path d="M3.4 0L-1 -3.2V-1.1H-4.6V1.1H-1V3.2Z" fill="#d6d6d6" stroke="#c4c4c4" stroke-width="0.5" stroke-linejoin="round"/></g><g transform="translate(4.9 19.1) rotate(315)"><path d="M3.4 0L-1 -3.2V-1.1H-4.6V1.1H-1V3.2Z" fill="#d6d6d6" stroke="#c4c4c4" stroke-width="0.5" stroke-linejoin="round"/></g></g></svg>
<svg class="ic" style="left:776px;top:99px" width="24" height="24" viewBox="0 0 24 24" ><path d="M18.6 1.6H1.8V18.2H6" fill="none" stroke="#8e8e8e" stroke-width="1.1" stroke-dasharray="3.6 2.6" stroke-dashoffset="-1"/><path d="M18.6 1.6V5" stroke="#8e8e8e" stroke-width="1.1"/>
<path d="M17 16.8L22.6 22.6" stroke="#9a9a9a" stroke-width="2.6" stroke-linecap="round"/><circle cx="13.6" cy="13" r="5.2" fill="#cfe6fa" stroke="#9c9c9c" stroke-width="1.6"/><circle cx="12.2" cy="11.6" r="1.6" fill="#eaf4fd"/></svg>
<svg class="ic" style="left:808px;top:99px" width="24" height="24" viewBox="0 0 24 24" ><path d="M16.5 14.4V7H14.2L18 1.2L21.8 7H19.5V14.4Z" fill="#a6d48b" stroke="#6c6c56" stroke-width="0.6" stroke-opacity="0.75"/><path d="M14.4 16.4H7V13.8L1.2 18L7 22.2V19.6H14.4Z" fill="#f3bb12" stroke="#6c6c56" stroke-width="0.6" stroke-opacity="0.75"/><rect x="14.4" y="14.4" width="7.2" height="7.2" fill="#d9372c" stroke="#6c6c56" stroke-width="0.7" stroke-opacity="0.8"/><text x="2.1" y="10.9" font-family="Liberation Sans,sans-serif" font-size="8.8" fill="#555" stroke="#555" stroke-width="0.25" textLength="10.6" lengthAdjust="spacingAndGlyphs">+X</text></svg>
<svg class="ic" style="left:840px;top:99px" width="24" height="24" viewBox="0 0 24 24" ><path d="M4.5 14.4V7H2.2L6 1.2L9.8 7H7.5V14.4Z" fill="#a6d48b" stroke="#6c6c56" stroke-width="0.6" stroke-opacity="0.75"/><path d="M9.6 16.4H17V13.8L22.8 18L17 22.2V19.6H9.6Z" fill="#f3bb12" stroke="#6c6c56" stroke-width="0.6" stroke-opacity="0.75"/><rect x="2.4" y="14.4" width="7.2" height="7.2" fill="#d9372c" stroke="#6c6c56" stroke-width="0.7" stroke-opacity="0.8"/><text x="11" y="10.9" font-family="Liberation Sans,sans-serif" font-size="8.8" fill="#555" stroke="#555" stroke-width="0.25" textLength="9" lengthAdjust="spacingAndGlyphs">-X</text></svg>
<svg class="ic" style="left:872px;top:99px" width="24" height="24" viewBox="0 0 24 24" ><path d="M4.5 14.4V7H2.2L6 1.2L9.8 7H7.5V14.4Z" fill="#a6d48b" stroke="#6c6c56" stroke-width="0.6" stroke-opacity="0.75"/><path d="M9.6 16.4H17V13.8L22.8 18L17 22.2V19.6H9.6Z" fill="#d9372c" stroke="#6c6c56" stroke-width="0.6" stroke-opacity="0.75"/><rect x="2.4" y="14.4" width="7.2" height="7.2" fill="#f3bb12" stroke="#6c6c56" stroke-width="0.7" stroke-opacity="0.8"/><text x="11" y="10.9" font-family="Liberation Sans,sans-serif" font-size="8.8" fill="#555" stroke="#555" stroke-width="0.25" textLength="10.6" lengthAdjust="spacingAndGlyphs">+Y</text></svg>
<svg class="ic" style="left:904px;top:99px" width="24" height="24" viewBox="0 0 24 24" ><path d="M16.5 14.4V7H14.2L18 1.2L21.8 7H19.5V14.4Z" fill="#a6d48b" stroke="#6c6c56" stroke-width="0.6" stroke-opacity="0.75"/><path d="M14.4 16.4H7V13.8L1.2 18L7 22.2V19.6H14.4Z" fill="#d9372c" stroke="#6c6c56" stroke-width="0.6" stroke-opacity="0.75"/><rect x="14.4" y="14.4" width="7.2" height="7.2" fill="#f3bb12" stroke="#6c6c56" stroke-width="0.7" stroke-opacity="0.8"/><text x="2.5" y="10.9" font-family="Liberation Sans,sans-serif" font-size="8.8" fill="#555" stroke="#555" stroke-width="0.25" textLength="9" lengthAdjust="spacingAndGlyphs">-Y</text></svg>
<svg class="ic" style="left:936px;top:99px" width="24" height="24" viewBox="0 0 24 24" ><path d="M16.5 14.4V7H14.2L18 1.2L21.8 7H19.5V14.4Z" fill="#f3bb12" stroke="#6c6c56" stroke-width="0.6" stroke-opacity="0.75"/><path d="M14.4 16.4H7V13.8L1.2 18L7 22.2V19.6H14.4Z" fill="#d9372c" stroke="#6c6c56" stroke-width="0.6" stroke-opacity="0.75"/><rect x="14.4" y="14.4" width="7.2" height="7.2" fill="#a6d48b" stroke="#6c6c56" stroke-width="0.7" stroke-opacity="0.8"/><text x="2.1" y="10.9" font-family="Liberation Sans,sans-serif" font-size="8.8" fill="#555" stroke="#555" stroke-width="0.25" textLength="10.6" lengthAdjust="spacingAndGlyphs">+Z</text></svg>
<svg class="ic" style="left:968px;top:99px" width="24" height="24" viewBox="0 0 24 24" ><path d="M4.5 14.4V7H2.2L6 1.2L9.8 7H7.5V14.4Z" fill="#f3bb12" stroke="#6c6c56" stroke-width="0.6" stroke-opacity="0.75"/><path d="M9.6 16.4H17V13.8L22.8 18L17 22.2V19.6H9.6Z" fill="#d9372c" stroke="#6c6c56" stroke-width="0.6" stroke-opacity="0.75"/><rect x="2.4" y="14.4" width="7.2" height="7.2" fill="#a6d48b" stroke="#6c6c56" stroke-width="0.7" stroke-opacity="0.8"/><text x="11" y="10.9" font-family="Liberation Sans,sans-serif" font-size="8.8" fill="#555" stroke="#555" stroke-width="0.25" textLength="9" lengthAdjust="spacingAndGlyphs">-Z</text></svg>
<svg class="ic" style="left:1026.5px;top:107.5px" width="8" height="7" viewBox="0 0 8 7"><path d="M0.7 0.5L3.3 3.5L0.7 6.5M4.5 0.5L7.1 3.5L4.5 6.5" fill="none" stroke="#2e2e2e" stroke-width="1.1"/></svg>
<svg class="ic" style="left:1044px;top:103px" width="6" height="18"><rect x="1" y="1" width="1" height="1" fill="#ffffff"/><rect x="0" y="0" width="1" height="1" fill="#a9a9a9"/><rect x="4" y="1" width="1" height="1" fill="#ffffff"/><rect x="3" y="0" width="1" height="1" fill="#a9a9a9"/><rect x="1" y="4" width="1" height="1" fill="#ffffff"/><rect x="0" y="3" width="1" height="1" fill="#a9a9a9"/><rect x="4" y="4" width="1" height="1" fill="#ffffff"/><rect x="3" y="3" width="1" height="1" fill="#a9a9a9"/><rect x="1" y="7" width="1" height="1" fill="#ffffff"/><rect x="0" y="6" width="1" height="1" fill="#a9a9a9"/><rect x="4" y="7" width="1" height="1" fill="#ffffff"/><rect x="3" y="6" width="1" height="1" fill="#a9a9a9"/><rect x="1" y="10" width="1" height="1" fill="#ffffff"/><rect x="0" y="9" width="1" height="1" fill="#a9a9a9"/><rect x="4" y="10" width="1" height="1" fill="#ffffff"/><rect x="3" y="9" width="1" height="1" fill="#a9a9a9"/><rect x="1" y="13" width="1" height="1" fill="#ffffff"/><rect x="0" y="12" width="1" height="1" fill="#a9a9a9"/><rect x="4" y="13" width="1" height="1" fill="#ffffff"/><rect x="3" y="12" width="1" height="1" fill="#a9a9a9"/><rect x="1" y="16" width="1" height="1" fill="#ffffff"/><rect x="0" y="15" width="1" height="1" fill="#a9a9a9"/><rect x="4" y="16" width="1" height="1" fill="#ffffff"/><rect x="3" y="15" width="1" height="1" fill="#a9a9a9"/></svg>
<div class="btn" style="left:1052px;top:96px;width:32px;height:31px;background:#dfdfdf;border-color:#a9a9a9"></div>
<svg class="ic" style="left:1056px;top:99px" width="24" height="24" viewBox="0 0 24 24" ><path d="M7.5 14.8V7.6H5.8L8.5 3.6L11.2 7.6H9.5V14.8Z" fill="#f0bd2c" stroke="#b09440" stroke-width="0.5"/>
<path d="M8.5 13.9H16.6V12.2L20.4 14.7L16.6 17.2V15.5H8.5Z" fill="#e8563a" stroke="#b5573f" stroke-width="0.5"/>
<path d="M8 14.2L5.2 17.8L4 16.8L3.8 21L7.8 19.8L6.5 18.8L9.2 15.2Z" fill="#7fc95f" stroke="#6aa552" stroke-width="0.5"/>
<path d="M11.8 6.6Q17.4 0.8 23 6.6Q17.4 11.4 11.8 6.6Z" fill="#fff" stroke="#9a9a9a" stroke-width="0.8"/><circle cx="17.4" cy="6.1" r="2.5" fill="#46439a"/><circle cx="17.4" cy="6.1" r="1.2" fill="#15153a"/></svg>
<svg class="ic" style="left:1087.7px;top:107.5px" width="8" height="7" viewBox="0 0 8 7"><path d="M0.7 0.5L3.3 3.5L0.7 6.5M4.5 0.5L7.1 3.5L4.5 6.5" fill="none" stroke="#2e2e2e" stroke-width="1.1"/></svg>
<svg class="ic" style="left:1105px;top:103px" width="6" height="18"><rect x="1" y="1" width="1" height="1" fill="#ffffff"/><rect x="0" y="0" width="1" height="1" fill="#a9a9a9"/><rect x="4" y="1" width="1" height="1" fill="#ffffff"/><rect x="3" y="0" width="1" height="1" fill="#a9a9a9"/><rect x="1" y="4" width="1" height="1" fill="#ffffff"/><rect x="0" y="3" width="1" height="1" fill="#a9a9a9"/><rect x="4" y="4" width="1" height="1" fill="#ffffff"/><rect x="3" y="3" width="1" height="1" fill="#a9a9a9"/><rect x="1" y="7" width="1" height="1" fill="#ffffff"/><rect x="0" y="6" width="1" height="1" fill="#a9a9a9"/><rect x="4" y="7" width="1" height="1" fill="#ffffff"/><rect x="3" y="6" width="1" height="1" fill="#a9a9a9"/><rect x="1" y="10" width="1" height="1" fill="#ffffff"/><rect x="0" y="9" width="1" height="1" fill="#a9a9a9"/><rect x="4" y="10" width="1" height="1" fill="#ffffff"/><rect x="3" y="9" width="1" height="1" fill="#a9a9a9"/><rect x="1" y="13" width="1" height="1" fill="#ffffff"/><rect x="0" y="12" width="1" height="1" fill="#a9a9a9"/><rect x="4" y="13" width="1" height="1" fill="#ffffff"/><rect x="3" y="12" width="1" height="1" fill="#a9a9a9"/><rect x="1" y="16" width="1" height="1" fill="#ffffff"/><rect x="0" y="15" width="1" height="1" fill="#a9a9a9"/><rect x="4" y="16" width="1" height="1" fill="#ffffff"/><rect x="3" y="15" width="1" height="1" fill="#a9a9a9"/></svg>
<div class="btn" style="left:1113px;top:96px;width:32px;height:31px;background:#dfdfdf;border-color:#a9a9a9"></div>
<svg class="ic" style="left:1117px;top:99px" width="24" height="24" viewBox="0 0 24 24" ><path d="M12.1 6.2C15.8 6.2 17.8 8.8 17.8 11.4C17.8 13.8 16.2 15 15.6 16.4L15 19.2H9.2L8.6 16.4C8 15 6.4 13.8 6.4 11.4C6.4 8.8 8.4 6.2 12.1 6.2Z" fill="#f4bc14" stroke="#b08f34" stroke-width="0.8"/>
<path d="M13.2 8C15.2 8.4 16.2 9.8 16.2 11.4" fill="none" stroke="#d9a318" stroke-width="0.9"/>
<path d="M9.8 20.2H14.4M10.2 21.4H14M11 22.6H13.2" stroke="#a4a4a4" stroke-width="0.9"/>
<path d="M12.1 1.2V4M5 3.6L7 5.8M19.2 3.6L17.2 5.8M1.8 11.2H4.4M19.8 11.2H22.4M4.6 18.2L6.8 16.2M19.6 18.2L17.4 16.2" stroke="#7c7c7c" stroke-width="0.9"/></svg>
<svg class="ic" style="left:2px;top:142px" width="6" height="18"><rect x="1" y="1" width="1" height="1" fill="#ffffff"/><rect x="0" y="0" width="1" height="1" fill="#a9a9a9"/><rect x="4" y="1" width="1" height="1" fill="#ffffff"/><rect x="3" y="0" width="1" height="1" fill="#a9a9a9"/><rect x="1" y="4" width="1" height="1" fill="#ffffff"/><rect x="0" y="3" width="1" height="1" fill="#a9a9a9"/><rect x="4" y="4" width="1" height="1" fill="#ffffff"/><rect x="3" y="3" width="1" height="1" fill="#a9a9a9"/><rect x="1" y="7" width="1" height="1" fill="#ffffff"/><rect x="0" y="6" width="1" height="1" fill="#a9a9a9"/><rect x="4" y="7" width="1" height="1" fill="#ffffff"/><rect x="3" y="6" width="1" height="1" fill="#a9a9a9"/><rect x="1" y="10" width="1" height="1" fill="#ffffff"/><rect x="0" y="9" width="1" height="1" fill="#a9a9a9"/><rect x="4" y="10" width="1" height="1" fill="#ffffff"/><rect x="3" y="9" width="1" height="1" fill="#a9a9a9"/><rect x="1" y="13" width="1" height="1" fill="#ffffff"/><rect x="0" y="12" width="1" height="1" fill="#a9a9a9"/><rect x="4" y="13" width="1" height="1" fill="#ffffff"/><rect x="3" y="12" width="1" height="1" fill="#a9a9a9"/><rect x="1" y="16" width="1" height="1" fill="#ffffff"/><rect x="0" y="15" width="1" height="1" fill="#a9a9a9"/><rect x="4" y="16" width="1" height="1" fill="#ffffff"/><rect x="3" y="15" width="1" height="1" fill="#a9a9a9"/></svg>
<svg class="ic" style="left:14px;top:138px" width="24" height="24" viewBox="0 0 24 24" ><rect x="3.5" y="1.2" width="17.2" height="21.4" rx="3" fill="#e1e1e1" stroke="#c1c1c1" stroke-width="0.9"/><rect x="4.8" y="2.4" width="14.6" height="19" rx="2.2" fill="none" stroke="#d2d2d2" stroke-width="0.7"/>
<rect x="6.2" y="3.8" width="11.8" height="3.8" rx="1.8" fill="#f1f1f1" stroke="#c0c0c0" stroke-width="0.8"/><circle cx="7.8" cy="11.4" r="1.35" fill="#b9b9b9"/><circle cx="7.8" cy="15.6" r="1.35" fill="#b9b9b9"/><circle cx="7.8" cy="19.8" r="1.35" fill="#b9b9b9"/><circle cx="12.1" cy="11.4" r="1.35" fill="#b9b9b9"/><circle cx="12.1" cy="15.6" r="1.35" fill="#b9b9b9"/><circle cx="12.1" cy="19.8" r="1.35" fill="#b9b9b9"/><circle cx="16.4" cy="11.4" r="1.35" fill="#b9b9b9"/><circle cx="16.4" cy="15.6" r="1.35" fill="#b9b9b9"/><circle cx="16.4" cy="19.8" r="1.35" fill="#b9b9b9"/></svg>
<svg class="ic" style="left:47px;top:138px" width="24" height="24" viewBox="0 0 24 24" ><g transform="rotate(40 12 12)"><ellipse cx="12.4" cy="10.2" rx="12" ry="9.2" fill="#b1b1b1"/><ellipse cx="12.2" cy="13.4" rx="12" ry="6.2" fill="#c6c6c6" stroke="#a2a2a2" stroke-width="0.8"/><ellipse cx="12.2" cy="13.2" rx="8.8" ry="4.3" fill="#b2b2b2" stroke="#a6a6a6" stroke-width="0.6"/><ellipse cx="12.2" cy="13.2" rx="6.4" ry="3" fill="#cdcdcd"/><ellipse cx="12.2" cy="13.2" rx="3.8" ry="1.7" fill="#d9d9d9" stroke="#b0b0b0" stroke-width="0.7"/></g></svg>
<svg class="ic" style="left:80px;top:138px" width="24" height="24" viewBox="0 0 24 24" ><path d="M13.5 0.9V12.8L22.8 16.9M13.5 12.8L2.2 16.9" fill="none" stroke="#b4b4b4" stroke-width="0.9" stroke-linejoin="round"/><path d="M2.2 3.2L13.5 0.9L15.7 3.7L6.5 6L7.6 16.9L4.6 18.6L2.2 16.9Z" fill="#a7a7a7"/><path d="M6.5 6L15.7 3.7L18 13.5L7.6 16.9Z" fill="#d0d0d0" stroke="#a9a9a9" stroke-width="0.7"/><path d="M2.2 3.2L13.5 0.9L22.8 4.3V16.9L10.2 22.7L2.2 16.9ZM2.2 3.2L10.2 8L22.8 4.3M10.2 8V22.7" fill="none" stroke="#a9a9a9" stroke-width="1" stroke-linejoin="round"/></svg>
<svg class="ic" style="left:113px;top:138px" width="24" height="24" viewBox="0 0 24 24" ><path d="M13.5 0.9V12.8L22.8 16.9M13.5 12.8L2.2 16.9" fill="none" stroke="#b4b4b4" stroke-width="0.9" stroke-linejoin="round"/><path d="M4.5 5.5L15.9 2.9L18 13.5L6.5 18.1Z" fill="#d0d0d0" stroke="#a9a9a9" stroke-width="0.7"/><path d="M2.2 3.2L13.5 0.9L22.8 4.3V16.9L10.2 22.7L2.2 16.9ZM2.2 3.2L10.2 8L22.8 4.3M10.2 8V22.7" fill="none" stroke="#a9a9a9" stroke-width="1" stroke-linejoin="round"/></svg>
<svg class="ic" style="left:146px;top:138px" width="24" height="24" viewBox="0 0 24 24" ><path d="M13.5 0.9V12.8L22.8 16.9M13.5 12.8L2.2 16.9" fill="none" stroke="#b4b4b4" stroke-width="0.9" stroke-linejoin="round"/><path d="M2.2 3.4L8.6 2.2V10.2L2.2 11.8Z" fill="#a9a9a9"/><path d="M5 6.8L8.6 6V10.2L5 11.2Z" fill="#cccccc"/><path d="M11.8 1.4L22.6 4.4V6L13.9 6.2L11.8 5Z" fill="#ababab"/><path d="M13.9 6.2L22.6 5.6V16.6L16 19.6L13.9 17.4Z" fill="#d2d2d2"/><path d="M9.4 4.6L11.4 4.2V22.4L9.4 21.6Z" fill="#a9a9a9"/><path d="M2.2 3.2L13.5 0.9L22.8 4.3V16.9L10.2 22.7L2.2 16.9ZM2.2 3.2L10.2 8L22.8 4.3M10.2 8V22.7" fill="none" stroke="#a9a9a9" stroke-width="1" stroke-linejoin="round"/></svg>
<svg class="ic" style="left:179px;top:138px" width="24" height="24" viewBox="0 0 24 24" ><path d="M1.4 5L12 1.2L22.8 5V17.6L12 22.8L1.4 17.6Z" fill="#e6e6e6" stroke="#b5b5b5" stroke-width="1"/><path d="M1.4 5L12 9.4L22.8 5M12 9.4V22.8" fill="none" stroke="#bcbcbc" stroke-width="0.9"/>
<path d="M5 6.6L10.4 4.6L15.6 6.6V14L10.4 16.4L5 14Z" fill="#a9a9a9"/><path d="M10.4 8.8L15.6 6.6V14L10.4 16.4Z" fill="#bfbfbf"/><path d="M5 6.6L10.4 4.6L15.6 6.6L10.4 8.8Z" fill="#989898"/></svg>
<svg class="ic" style="left:212px;top:138px" width="24" height="24" viewBox="0 0 24 24" ><circle cx="11.9" cy="11.5" r="9.4" fill="#f1f1f1" stroke="#adadad" stroke-width="0.9"/><g fill="none" stroke="#b2b2b2" stroke-width="0.8"><ellipse cx="11.9" cy="11.5" rx="4.6" ry="9.2"/><ellipse cx="11.9" cy="11.5" rx="9.2" ry="3.2"/><circle cx="11.9" cy="11.5" r="6.6"/></g>
<g fill="#e6e6e6" stroke="#adadad" stroke-width="0.8"><circle cx="11.9" cy="2.3" r="1.7"/><circle cx="11.9" cy="20.8" r="1.7"/><circle cx="2.7" cy="11.5" r="1.7"/><circle cx="21.1" cy="11.5" r="1.7"/><circle cx="7.6" cy="8.6" r="1.2"/><circle cx="16.1" cy="8.6" r="1.2"/><circle cx="7.6" cy="14.5" r="1.2"/><circle cx="16.1" cy="14.5" r="1.2"/></g></svg>
<svg class="ic" style="left:245px;top:138px" width="24" height="24" viewBox="0 0 24 24" ><circle cx="9.1" cy="12" r="3.9" fill="#d0d0d0" stroke="#a9a9a9" stroke-width="0.9"/>
<g fill="none" stroke="#ababab" stroke-width="0.9"><path d="M3 5.5C5.4 2.6 12 1.4 14.5 5.5H20.8"/><path d="M3 8.6C5.4 5.6 12 4.4 14.5 8.6H20.8"/><path d="M3 15.2C5.4 18.2 12 19.4 14.5 15.2H20.8"/><path d="M3 18.4C5.4 21.4 12 22.6 14.5 18.4H20.8"/></g></svg>
<svg class="ic" style="left:278px;top:138px" width="24" height="24" viewBox="0 0 24 24" ><path d="M1.4 19.4V12.4H8L21.8 12V19.4Z" fill="#eaeaea" stroke="#b6b6b6" stroke-width="0.9"/><path d="M1.4 19.4V11.6C8 11.4 12.6 8.8 14.6 4.4L21.6 7.8C19.4 14 13 19 5 19.4Z" fill="#cdcdcd" stroke="#adadad" stroke-width="0.9" stroke-linejoin="round"/></svg>
<svg class="ic" style="left:311px;top:138px" width="24" height="24" viewBox="0 0 24 24" ><circle cx="11.8" cy="11.9" r="8.7" fill="#f4f4f4" stroke="#b9b9b9" stroke-width="0.9"/><circle cx="15" cy="13.2" r="3.6" fill="#cbcbcb" stroke="#b2b2b2" stroke-width="0.8"/><circle cx="8.6" cy="8.4" r="2.2" fill="#efefef" stroke="#b9b9b9" stroke-width="0.8"/><circle cx="8" cy="15.2" r="1.6" fill="#cbcbcb" stroke="#b2b2b2" stroke-width="0.7"/></svg>
<svg class="ic" style="left:344px;top:138px" width="24" height="24" viewBox="0 0 24 24" ><circle cx="12" cy="12.4" r="8.6" fill="#f4f4f4" stroke="#b9b9b9" stroke-width="0.9"/><circle cx="3.6" cy="3" r="2.2" fill="#f4f4f4" stroke="#b9b9b9" stroke-width="0.8"/><circle cx="15.4" cy="13.2" r="3.6" fill="#cbcbcb" stroke="#b2b2b2" stroke-width="0.8"/><circle cx="8.4" cy="15.6" r="1.6" fill="#cbcbcb" stroke="#b2b2b2" stroke-width="0.7"/></svg>
<svg class="ic" style="left:381px;top:142px" width="6" height="18"><rect x="1" y="1" width="1" height="1" fill="#ffffff"/><rect x="0" y="0" width="1" height="1" fill="#a9a9a9"/><rect x="4" y="1" width="1" height="1" fill="#ffffff"/><rect x="3" y="0" width="1" height="1" fill="#a9a9a9"/><rect x="1" y="4" width="1" height="1" fill="#ffffff"/><rect x="0" y="3" width="1" height="1" fill="#a9a9a9"/><rect x="4" y="4" width="1" height="1" fill="#ffffff"/><rect x="3" y="3" width="1" height="1" fill="#a9a9a9"/><rect x="1" y="7" width="1" height="1" fill="#ffffff"/><rect x="0" y="6" width="1" height="1" fill="#a9a9a9"/><rect x="4" y="7" width="1" height="1" fill="#ffffff"/><rect x="3" y="6" width="1" height="1" fill="#a9a9a9"/><rect x="1" y="10" width="1" height="1" fill="#ffffff"/><rect x="0" y="9" width="1" height="1" fill="#a9a9a9"/><rect x="4" y="10" width="1" height="1" fill="#ffffff"/><rect x="3" y="9" width="1" height="1" fill="#a9a9a9"/><rect x="1" y="13" width="1" height="1" fill="#ffffff"/><rect x="0" y="12" width="1" height="1" fill="#a9a9a9"/><rect x="4" y="13" width="1" height="1" fill="#ffffff"/><rect x="3" y="12" width="1" height="1" fill="#a9a9a9"/><rect x="1" y="16" width="1" height="1" fill="#ffffff"/><rect x="0" y="15" width="1" height="1" fill="#a9a9a9"/><rect x="4" y="16" width="1" height="1" fill="#ffffff"/><rect x="3" y="15" width="1" height="1" fill="#a9a9a9"/></svg>
<svg class="ic" style="left:392px;top:138px" width="24" height="24" viewBox="0 0 24 24" ><path d="M5.4 3.6V19.4H21" fill="none" stroke="#adadad" stroke-width="1.1"/><path d="M13.6 4.6V17.4M11.8 4.6H15.4M11.8 17.4H15.4" stroke="#adadad" stroke-width="0.9"/><rect x="11.6" y="7.6" width="4" height="6.4" fill="#f2f2f2" stroke="#adadad" stroke-width="0.9"/><path d="M11.6 10.8H15.6" stroke="#adadad" stroke-width="0.8"/></svg>
<svg class="ic" style="left:425px;top:138px" width="24" height="24" viewBox="0 0 24 24" ><path d="M3 3.6Q3 2.4 4.2 2.4H17.4Q18.6 2.4 18.6 3.6V10.4H11.6V17.6H4.2Q3 17.6 3 16.4Z" fill="#ededed" stroke="#c2c2c2" stroke-width="1.1"/><rect x="14.2" y="13" width="7.8" height="7.8" fill="#d3d3d3" stroke="#adadad" stroke-width="0.9" stroke-dasharray="1.6 1"/></svg>
<svg class="ic" style="left:458px;top:138px" width="24" height="24" viewBox="0 0 24 24" ><rect x="3" y="17" width="3" height="6.3" fill="#a2a2a2"/><rect x="6" y="11" width="3" height="12.3" fill="#b2b2b2"/><rect x="9" y="4.6" width="3" height="18.7" fill="#c1c1c1"/><rect x="12" y="0" width="2.6" height="23.3" fill="#acacac"/><rect x="14.6" y="7.6" width="3" height="15.7" fill="#c9c9c9"/><rect x="17.6" y="13.2" width="3" height="10.1" fill="#d2d2d2"/><rect x="20.6" y="18" width="3" height="5.3" fill="#dadada"/>
<path d="M1.8 -0.2V23.4H24.6" fill="none" stroke="#a6a6a6" stroke-width="1"/></svg>
<svg class="ic" style="left:491px;top:138px" width="24" height="24" viewBox="0 0 24 24" ><circle cx="7.6" cy="7.2" r="4.1" fill="#f4f4f4" stroke="#ababab" stroke-width="0.9"/><path d="M7.6 4.6V7.4L9.6 8.8" fill="none" stroke="#ababab" stroke-width="0.9"/><circle cx="17.8" cy="7.2" r="4.3" fill="#b4b4b4" stroke="#a6a6a6" stroke-width="0.6"/><path d="M4.8 14.2V19.8M4.8 17.4H7.4L8.4 14.6L9.6 19.8L10.8 14L12 19.8L13.2 14L14.4 19.8L15.6 14.4L16.8 19.4L18 15.6L19 18.4L20 16.8H23" fill="none" stroke="#9c9c9c" stroke-width="1"/><path d="M4.8 21H22.4" stroke="#bdbdbd" stroke-width="0.9"/></svg>
<svg class="ic" style="left:524px;top:138px" width="24" height="24" viewBox="0 0 24 24" ><path d="M4.3 2.6L15.2 3.2L22.7 7L19.8 18.7L7.2 21.5L3.7 12.9Z" fill="#c8c8c8" stroke="#b2b2b2" stroke-width="0.8"/>
<path d="M6.4 22.2L22.8 7.2M15.4 2L23 7.6" stroke="#9a9a9a" stroke-width="1"/><path d="M2.8 15.2L5 13.8L5.2 11.2L7.4 13L7.4 9.6L9.8 11.6L9.6 8L12.2 10L11.8 6.4L14.6 8.6L14 5L17 7L16.4 3.6" fill="none" stroke="#8c8c8c" stroke-width="0.9"/><path d="M2.6 15.4L17.4 3.4" stroke="#9a9a9a" stroke-width="0.8"/></svg>
<svg class="ic" style="left:557px;top:138px" width="24" height="24" viewBox="0 0 24 24" ><circle cx="7.6" cy="7.2" r="4.1" fill="#f4f4f4" stroke="#ababab" stroke-width="0.9"/><path d="M7.6 4.6V7.4L9.6 8.8" fill="none" stroke="#ababab" stroke-width="0.9"/><rect x="14.2" y="3.2" width="7.4" height="7.4" fill="#ededed" stroke="#ababab" stroke-width="0.9" stroke-dasharray="2 1.2"/><path d="M17.9 5L20 9H15.8Z" fill="#d8d8d8" stroke="#b4b4b4" stroke-width="0.6"/><path d="M4.8 14.2V19.8M4.8 17.4H7.4L8.4 14.6L9.6 19.8L10.8 14L12 19.8L13.2 14L14.4 19.8L15.6 14.4L16.8 19.4L18 15.6L19 18.4L20 16.8H23" fill="none" stroke="#9c9c9c" stroke-width="1"/><path d="M4.8 21H22.4" stroke="#bdbdbd" stroke-width="0.9"/></svg>
<svg class="ic" style="left:590px;top:138px" width="24" height="24" viewBox="0 0 24 24" ><path d="M2.4 6.2L12.6 1.2L23 6.2V17.8L12.6 22.8L2.4 17.8Z" fill="#e8e8e8" stroke="#dedede" stroke-width="0.8"/><path d="M2.4 6.2L12.6 10.6L23 6.2M12.6 10.6V22.8" fill="none" stroke="#dfdfdf" stroke-width="0.8"/>
<path d="M12.6 5V19M6.6 8.6L18.6 15.4M18.6 8.6L6.6 15.4" stroke="#a9a9a9" stroke-width="0.9"/></svg>
<svg class="ic" style="left:623px;top:138px" width="24" height="24" viewBox="0 0 24 24" ><g transform="translate(1.2 0)" fill="none" stroke="#b0b0b0" stroke-width="1.3" stroke-linecap="round"><path d="M5.8 3C3.6 3 3.6 4.4 3.6 6V9.4C3.6 11 2.6 12 1.4 12C2.6 12 3.6 13 3.6 14.6V18C3.6 19.6 3.6 21 5.8 21"/><path d="M18.8 3C21 3 21 4.4 21 6V9.4C21 11 22 12 23.2 12C22 12 21 13 21 14.6V18C21 19.6 21 21 18.8 21"/></g><g fill="#b0b0b0"><circle cx="8.7" cy="17.6" r="1.5"/><circle cx="13.5" cy="17.6" r="1.5"/><circle cx="18.3" cy="17.6" r="1.5"/></g></svg>
<svg class="ic" style="left:661px;top:142px" width="6" height="18"><rect x="1" y="1" width="1" height="1" fill="#ffffff"/><rect x="0" y="0" width="1" height="1" fill="#a9a9a9"/><rect x="4" y="1" width="1" height="1" fill="#ffffff"/><rect x="3" y="0" width="1" height="1" fill="#a9a9a9"/><rect x="1" y="4" width="1" height="1" fill="#ffffff"/><rect x="0" y="3" width="1" height="1" fill="#a9a9a9"/><rect x="4" y="4" width="1" height="1" fill="#ffffff"/><rect x="3" y="3" width="1" height="1" fill="#a9a9a9"/><rect x="1" y="7" width="1" height="1" fill="#ffffff"/><rect x="0" y="6" width="1" height="1" fill="#a9a9a9"/><rect x="4" y="7" width="1" height="1" fill="#ffffff"/><rect x="3" y="6" width="1" height="1" fill="#a9a9a9"/><rect x="1" y="10" width="1" height="1" fill="#ffffff"/><rect x="0" y="9" width="1" height="1" fill="#a9a9a9"/><rect x="4" y="10" width="1" height="1" fill="#ffffff"/><rect x="3" y="9" width="1" height="1" fill="#a9a9a9"/><rect x="1" y="13" width="1" height="1" fill="#ffffff"/><rect x="0" y="12" width="1" height="1" fill="#a9a9a9"/><rect x="4" y="13" width="1" height="1" fill="#ffffff"/><rect x="3" y="12" width="1" height="1" fill="#a9a9a9"/><rect x="1" y="16" width="1" height="1" fill="#ffffff"/><rect x="0" y="15" width="1" height="1" fill="#a9a9a9"/><rect x="4" y="16" width="1" height="1" fill="#ffffff"/><rect x="3" y="15" width="1" height="1" fill="#a9a9a9"/></svg>
<svg class="ic" style="left:673px;top:138px" width="24" height="24" viewBox="0 0 24 24" ><g transform="rotate(-44.6 11.9 11.9)"><rect x="0.3" y="8.1" width="23.2" height="7.6" fill="#f5be14" stroke="#8f7a34" stroke-width="0.9"/><path d="M2.4 8.1V11.6M4.6 8.1V10.2M6.8 8.1V11.6M9 8.1V10.2M11.2 8.1V11.6M13.4 8.1V10.2M15.6 8.1V11.6M17.8 8.1V10.2M20 8.1V11.6M22 8.1V10.2" stroke="#7d6a2c" stroke-width="0.9"/></g></svg>
<svg class="ic" style="left:710px;top:142px" width="6" height="18"><rect x="1" y="1" width="1" height="1" fill="#ffffff"/><rect x="0" y="0" width="1" height="1" fill="#a9a9a9"/><rect x="4" y="1" width="1" height="1" fill="#ffffff"/><rect x="3" y="0" width="1" height="1" fill="#a9a9a9"/><rect x="1" y="4" width="1" height="1" fill="#ffffff"/><rect x="0" y="3" width="1" height="1" fill="#a9a9a9"/><rect x="4" y="4" width="1" height="1" fill="#ffffff"/><rect x="3" y="3" width="1" height="1" fill="#a9a9a9"/><rect x="1" y="7" width="1" height="1" fill="#ffffff"/><rect x="0" y="6" width="1" height="1" fill="#a9a9a9"/><rect x="4" y="7" width="1" height="1" fill="#ffffff"/><rect x="3" y="6" width="1" height="1" fill="#a9a9a9"/><rect x="1" y="10" width="1" height="1" fill="#ffffff"/><rect x="0" y="9" width="1" height="1" fill="#a9a9a9"/><rect x="4" y="10" width="1" height="1" fill="#ffffff"/><rect x="3" y="9" width="1" height="1" fill="#a9a9a9"/><rect x="1" y="13" width="1" height="1" fill="#ffffff"/><rect x="0" y="12" width="1" height="1" fill="#a9a9a9"/><rect x="4" y="13" width="1" height="1" fill="#ffffff"/><rect x="3" y="12" width="1" height="1" fill="#a9a9a9"/><rect x="1" y="16" width="1" height="1" fill="#ffffff"/><rect x="0" y="15" width="1" height="1" fill="#a9a9a9"/><rect x="4" y="16" width="1" height="1" fill="#ffffff"/><rect x="3" y="15" width="1" height="1" fill="#a9a9a9"/></svg>
<div class="t" style="left:1px;top:171px">Pipeline Browser</div>
<svg class="ic" style="left:262px;top:174px" width="11" height="11" viewBox="0 0 11 11"><rect x="0.5" y="0.5" width="10" height="10" rx="2.6" fill="#f4f4f4" stroke="#69645f"/><rect x="4.6" y="2.6" width="3.8" height="3.8" rx="1" fill="none" stroke="#69645f" stroke-width="1"/><rect x="2.6" y="4.6" width="3.8" height="3.8" rx="1" fill="#f4f4f4" stroke="#69645f" stroke-width="1"/></svg><svg class="ic" style="left:276px;top:174px" width="11" height="11" viewBox="0 0 11 11"><rect x="0.5" y="0.5" width="10" height="10" rx="2.6" fill="#f4f4f4" stroke="#69645f"/><path d="M2.9 2.9L8.1 8.1M8.1 2.9L2.9 8.1" stroke="#57524d" stroke-width="1.9"/></svg>
<div class="abs" style="left:0;top:189px;width:289px;height:201px;background:#fff;border:1px solid #b5b5b5;border-left:none"></div>
<div class="abs" style="left:27px;top:190px;width:1px;height:5px;background:#808080"></div>
<svg class="ic" style="left:23px;top:196px" width="8" height="14" preserveAspectRatio="none" viewBox="0 0 9 15"><defs><linearGradient id="srv" x1="0" y1="0" x2="0" y2="1"><stop offset="0" stop-color="#fff"/><stop offset="1" stop-color="#6a6a6a"/></linearGradient></defs><rect x="0.5" y="0.5" width="8" height="14" fill="url(#srv)" stroke="#222"/><rect x="2.5" y="3" width="4" height="1.6" fill="#111"/></svg>
<div class="t" style="left:38px;top:194px">builtin:</div>
<svg class="ic" style="left:136px;top:392px" width="18" height="1" fill="#b8b8b8"><rect x="0" y="0" width="1" height="1"/><rect x="3" y="0" width="1" height="1"/><rect x="6" y="0" width="1" height="1"/><rect x="9" y="0" width="1" height="1"/><rect x="12" y="0" width="1" height="1"/><rect x="15" y="0" width="1" height="1"/></svg>
<svg class="ic" style="left:292px;top:464px" width="1" height="16" fill="#b4b4b4"><rect x="0" y="0" width="1" height="1"/><rect x="0" y="3" width="1" height="1"/><rect x="0" y="6" width="1" height="1"/><rect x="0" y="9" width="1" height="1"/><rect x="0" y="12" width="1" height="1"/><rect x="0" y="15" width="1" height="1"/></svg>
<div class="ln" style="left:0;top:419px;width:289px;background:#b8b8b8"></div>
<div class="abs" style="left:76px;top:398px;width:84px;height:22px;background:linear-gradient(#e2e2e2,#d9d9d9);border:1px solid #b5b5b5;border-radius:3px 3px 0 0"></div>
<div class="abs" style="left:-3px;top:396px;width:80px;height:24px;background:linear-gradient(#fafafa,#efefef);border:1px solid #b5b5b5;border-bottom:none;border-radius:3px 3px 0 0"></div>
<div class="t" style="left:9px;top:400px">Properties</div><div class="t" style="left:88px;top:401px">Information</div>
<div class="t" style="left:1px;top:422px">Properties</div>
<svg class="ic" style="left:262px;top:425px" width="11" height="11" viewBox="0 0 11 11"><rect x="0.5" y="0.5" width="10" height="10" rx="2.6" fill="#f4f4f4" stroke="#69645f"/><rect x="4.6" y="2.6" width="3.8" height="3.8" rx="1" fill="none" stroke="#69645f" stroke-width="1"/><rect x="2.6" y="4.6" width="3.8" height="3.8" rx="1" fill="#f4f4f4" stroke="#69645f" stroke-width="1"/></svg><svg class="ic" style="left:276px;top:425px" width="11" height="11" viewBox="0 0 11 11"><rect x="0.5" y="0.5" width="10" height="10" rx="2.6" fill="#f4f4f4" stroke="#69645f"/><path d="M2.9 2.9L8.1 8.1M8.1 2.9L2.9 8.1" stroke="#57524d" stroke-width="1.9"/></svg>
<div class="btn dis" style="left:6px;top:449px;width:80px;height:24px"></div><div class="t" style="left:39px;top:453px;color:#aaa">Apply</div>
<svg class="ic" style="left:22px;top:453px" width="16" height="16" viewBox="0 0 16 16" ><g transform="translate(1.6 1.6) scale(0.84)"><path d="M7 6.4L11.4 2.2L9.4 1.6L15.4 0.8L14.2 6.6L12.8 4.8L9.8 8Z" fill="#c4c4c4" stroke="#b3b3b3" stroke-width="0.6"/><path d="M1.4 6.2L4.4 5L8.4 6.2V13.6L5.2 15.4L1.4 13.8Z" fill="#e2e2e2" stroke="#b3b3b3" stroke-width="0.8"/><path d="M1.4 6.2L5.2 7.6V15.4L1.4 13.8Z" fill="#c2c2c2"/></g></svg>
<div class="btn dis" style="left:88px;top:449px;width:80px;height:24px"></div><div class="t" style="left:120px;top:453px;color:#aaa">Reset</div>
<svg class="ic" style="left:103px;top:453px" width="16" height="16" viewBox="0 0 16 16" ><circle cx="8.6" cy="8" r="5.6" fill="none" stroke="#a2a2a2" stroke-width="2.6"/><path d="M4.8 11.8L12.4 4.2" stroke="#a2a2a2" stroke-width="2.6"/></svg>
<div class="btn dis" style="left:170px;top:449px;width:80px;height:24px"></div><div class="t" style="left:201px;top:453px;color:#aaa">Delete</div>
<svg class="ic" style="left:183px;top:453px" width="16" height="16" viewBox="0 0 16 16" ><path d="M3.4 3.4L12.6 12.6M12.6 3.4L3.4 12.6" stroke="#a6a6a6" stroke-width="3.2"/></svg>
<div class="btn dis" style="left:252px;top:449px;width:28px;height:24px"></div><div class="t" style="left:261px;top:450px;color:#b9b9b9;font-size:18px;line-height:22px">?</div>
<div class="inp" style="left:6px;top:479px;width:248px;height:22px"></div><div class="t" style="left:9px;top:482px;color:#8f8f8f">Search ... (use Esc to clear text)</div>
<div class="btn dis" style="left:256px;top:479px;width:24px;height:23px"></div>
<svg class="ic" style="left:260px;top:482px" width="16" height="16" viewBox="0 0 16 16" ><path d="M15.19 6.94L15.19 9.46L13.25 9.46L12.60 11.02L13.97 12.40L12.20 14.17L10.82 12.80L9.26 13.45L9.26 15.39L6.74 15.39L6.74 13.45L5.18 12.80L3.80 14.17L2.03 12.40L3.40 11.02L2.75 9.46L0.81 9.46L0.81 6.94L2.75 6.94L3.40 5.38L2.03 4.00L3.80 2.23L5.18 3.60L6.74 2.95L6.74 1.01L9.26 1.01L9.26 2.95L10.82 3.60L12.20 2.23L13.97 4.00L12.60 5.38L13.25 6.94Z" fill="#c6c6c6" stroke="#a9a9a9" stroke-width="0.8" stroke-linejoin="round"/><circle cx="8" cy="8.2" r="2.3" fill="#f4f4f4" stroke="#a9a9a9" stroke-width="0.8"/></svg>
<div class="abs" style="left:6px;top:508px;width:132px;height:26px;border:1px solid #b0b0b0;background:#efefef"></div><div class="abs" style="left:17px;top:519px;width:13px;height:4px;background:#3b95d0;border-radius:1px"></div><div class="t" style="left:38px;top:513px;font-weight:bold">Properties</div><div class="btn dis" style="left:142px;top:509px;width:28px;height:24px"></div><svg class="ic" style="left:148px;top:513px" width="16" height="16" viewBox="0 0 16 16" ><rect x="5.4" y="1" width="8.6" height="10.4" fill="#e4e4e4" stroke="#c0c0c0" stroke-width="0.8"/><path d="M7 3.6H12.4M7 5.6H12.4M7 7.6H12.4" stroke="#c8c8c8" stroke-width="0.7"/><path d="M1.6 4.6H7.6L10.2 7.2V15H1.6Z" fill="#e4e4e4" stroke="#c0c0c0" stroke-width="0.8"/><path d="M3.2 8H8.6M3.2 10H8.6M3.2 12H8.6M3.2 13.6H6.6" stroke="#c8c8c8" stroke-width="0.7"/></svg><div class="btn dis" style="left:174px;top:509px;width:28px;height:24px"></div><svg class="ic" style="left:180px;top:513px" width="16" height="16" viewBox="0 0 16 16" ><g transform="translate(16 0) scale(-1 1)"><rect x="1.6" y="2.4" width="10.4" height="12.6" rx="0.8" fill="#cfcfcf" stroke="#c0c0c0" stroke-width="0.8"/><rect x="4.6" y="1" width="4.4" height="2.8" rx="0.6" fill="#cfcfcf" stroke="#c0c0c0" stroke-width="0.7"/><path d="M6 5.8H11.8L14.4 8.4V15.2H6Z" fill="#e8e8e8" stroke="#c0c0c0" stroke-width="0.8"/><path d="M7.6 9.4H12.8M7.6 11.2H12.8M7.6 13H12.8" stroke="#cacaca" stroke-width="0.7"/></g></svg><div class="btn dis" style="left:206px;top:509px;width:28px;height:24px"></div><svg class="ic" style="left:212px;top:513px" width="16" height="16" viewBox="0 0 16 16" ><path d="M2.6 7.4A5.6 5.6 0 0 1 12.4 4.2" fill="none" stroke="#a9a9a9" stroke-width="2.2"/><path d="M14.6 1.4V7H9Z" fill="#a9a9a9"/><path d="M13.4 8.6A5.6 5.6 0 0 1 3.6 11.8" fill="none" stroke="#a9a9a9" stroke-width="2.2"/><path d="M1.4 14.6V9H7Z" fill="#a9a9a9"/></svg><div class="btn dis" style="left:238px;top:509px;width:28px;height:24px"></div><svg class="ic" style="left:244px;top:513px" width="16" height="16" viewBox="0 0 16 16" ><path d="M1.6 1.4H14.4V14.6H3L1.6 13.2Z" fill="#a8a8a8"/><rect x="3.8" y="1.4" width="8.4" height="6" fill="#e9e9e9"/><rect x="4.6" y="9.8" width="6.8" height="4.8" fill="#8d8d8d"/><rect x="9" y="10.8" width="1.6" height="2.8" fill="#e9e9e9"/></svg>
<div class="abs" style="left:6px;top:546px;width:132px;height:26px;border:1px solid #b0b0b0;background:#efefef"></div><div class="abs" style="left:17px;top:557px;width:13px;height:4px;background:#3b95d0;border-radius:1px"></div><div class="t" style="left:38px;top:551px;font-weight:bold">Display</div><div class="btn dis" style="left:142px;top:547px;width:28px;height:24px"></div><svg class="ic" style="left:148px;top:551px" width="16" height="16" viewBox="0 0 16 16" ><rect x="5.4" y="1" width="8.6" height="10.4" fill="#e4e4e4" stroke="#c0c0c0" stroke-width="0.8"/><path d="M7 3.6H12.4M7 5.6H12.4M7 7.6H12.4" stroke="#c8c8c8" stroke-width="0.7"/><path d="M1.6 4.6H7.6L10.2 7.2V15H1.6Z" fill="#e4e4e4" stroke="#c0c0c0" stroke-width="0.8"/><path d="M3.2 8H8.6M3.2 10H8.6M3.2 12H8.6M3.2 13.6H6.6" stroke="#c8c8c8" stroke-width="0.7"/></svg><div class="btn dis" style="left:174px;top:547px;width:28px;height:24px"></div><svg class="ic" style="left:180px;top:551px" width="16" height="16" viewBox="0 0 16 16" ><g transform="translate(16 0) scale(-1 1)"><rect x="1.6" y="2.4" width="10.4" height="12.6" rx="0.8" fill="#cfcfcf" stroke="#c0c0c0" stroke-width="0.8"/><rect x="4.6" y="1" width="4.4" height="2.8" rx="0.6" fill="#cfcfcf" stroke="#c0c0c0" stroke-width="0.7"/><path d="M6 5.8H11.8L14.4 8.4V15.2H6Z" fill="#e8e8e8" stroke="#c0c0c0" stroke-width="0.8"/><path d="M7.6 9.4H12.8M7.6 11.2H12.8M7.6 13H12.8" stroke="#cacaca" stroke-width="0.7"/></g></svg><div class="btn dis" style="left:206px;top:547px;width:28px;height:24px"></div><svg class="ic" style="left:212px;top:551px" width="16" height="16" viewBox="0 0 16 16" ><path d="M2.6 7.4A5.6 5.6 0 0 1 12.4 4.2" fill="none" stroke="#a9a9a9" stroke-width="2.2"/><path d="M14.6 1.4V7H9Z" fill="#a9a9a9"/><path d="M13.4 8.6A5.6 5.6 0 0 1 3.6 11.8" fill="none" stroke="#a9a9a9" stroke-width="2.2"/><path d="M1.4 14.6V9H7Z" fill="#a9a9a9"/></svg><div class="btn dis" style="left:238px;top:547px;width:28px;height:24px"></div><svg class="ic" style="left:244px;top:551px" width="16" height="16" viewBox="0 0 16 16" ><path d="M1.6 1.4H14.4V14.6H3L1.6 13.2Z" fill="#a8a8a8"/><rect x="3.8" y="1.4" width="8.4" height="6" fill="#e9e9e9"/><rect x="4.6" y="9.8" width="6.8" height="4.8" fill="#8d8d8d"/><rect x="9" y="10.8" width="1.6" height="2.8" fill="#e9e9e9"/></svg>
<div class="abs" style="left:6px;top:584px;width:132px;height:26px;border:1px solid #b0b0b0;background:#efefef"></div><div class="abs" style="left:17px;top:595px;width:13px;height:4px;background:#3b95d0;border-radius:1px"></div><div class="t" style="left:38px;top:589px;font-weight:bold">View (Render Vi</div><div class="btn" style="left:142px;top:585px;width:28px;height:24px"></div><svg class="ic" style="left:148px;top:589px" width="16" height="16" viewBox="0 0 16 16" ><rect x="5.4" y="1" width="8.6" height="10.4" fill="#e6e6e6" stroke="#6e6e6e" stroke-width="0.8"/><path d="M7 3.6H12.4M7 5.6H12.4M7 7.6H12.4" stroke="#8a8a8a" stroke-width="0.7"/><path d="M1.6 4.6H7.6L10.2 7.2V15H1.6Z" fill="#e6e6e6" stroke="#6e6e6e" stroke-width="0.8"/><path d="M3.2 8H8.6M3.2 10H8.6M3.2 12H8.6M3.2 13.6H6.6" stroke="#8a8a8a" stroke-width="0.7"/></svg><div class="btn dis" style="left:174px;top:585px;width:28px;height:24px"></div><svg class="ic" style="left:180px;top:589px" width="16" height="16" viewBox="0 0 16 16" ><g transform="translate(16 0) scale(-1 1)"><rect x="1.6" y="2.4" width="10.4" height="12.6" rx="0.8" fill="#cfcfcf" stroke="#c0c0c0" stroke-width="0.8"/><rect x="4.6" y="1" width="4.4" height="2.8" rx="0.6" fill="#cfcfcf" stroke="#c0c0c0" stroke-width="0.7"/><path d="M6 5.8H11.8L14.4 8.4V15.2H6Z" fill="#e8e8e8" stroke="#c0c0c0" stroke-width="0.8"/><path d="M7.6 9.4H12.8M7.6 11.2H12.8M7.6 13H12.8" stroke="#cacaca" stroke-width="0.7"/></g></svg><div class="btn" style="left:206px;top:585px;width:28px;height:24px"></div><svg class="ic" style="left:212px;top:589px" width="16" height="16" viewBox="0 0 16 16" ><path d="M2.6 7.4A5.6 5.6 0 0 1 12.4 4.2" fill="none" stroke="#3a8bc4" stroke-width="2.2"/><path d="M14.6 1.4V7H9Z" fill="#3a8bc4"/><path d="M13.4 8.6A5.6 5.6 0 0 1 3.6 11.8" fill="none" stroke="#3a8bc4" stroke-width="2.2"/><path d="M1.4 14.6V9H7Z" fill="#3a8bc4"/></svg><div class="btn" style="left:238px;top:585px;width:28px;height:24px"></div><svg class="ic" style="left:244px;top:589px" width="16" height="16" viewBox="0 0 16 16" ><path d="M1.6 1.4H14.4V14.6H3L1.6 13.2Z" fill="#3467b4"/><rect x="3.8" y="1.4" width="8.4" height="6" fill="#eef1f6"/><rect x="4.6" y="9.8" width="6.8" height="4.8" fill="#4a4a5c"/><rect x="9" y="10.8" width="1.6" height="2.8" fill="#eef1f6"/></svg>
<div class="abs" style="left:266px;top:508px;width:15px;height:253px;background:#f3f3f3;border-left:1px solid #c6c6c6"></div>
<div class="abs" style="left:267px;top:522px;width:14px;height:154px;background:linear-gradient(90deg,#f1f1f1,#fdfdfd 45%,#f9f9f9)"></div>
<div class="abs" style="left:267px;top:676px;width:14px;height:70px;background:#e2e2e2"></div>
<div class="ln" style="left:267px;top:521px;width:14px;background:#c6c6c6"></div>
<svg class="ic" style="left:269px;top:512px" width="9" height="5" viewBox="0 0 9 5"><path d="M0.2 4.6H8.8L4.5 0.4Z" fill="#3a3a3a"/></svg>
<svg class="ic" style="left:269px;top:752px" width="9" height="5" viewBox="0 0 9 5"><path d="M0.2 0.4H8.8L4.5 4.6Z" fill="#3a3a3a"/></svg>
<div class="chk" style="left:6px;top:619px"></div><div class="t" style="left:25px;top:618px">Axes Grid</div>
<div class="btn" style="left:88px;top:616px;width:178px;height:21px"></div><div class="t" style="left:88px;width:178px;text-align:center;top:618px">Edit</div>
<div class="chk" style="left:6px;top:643px"></div><div class="t" style="left:25px;top:642px">Center Axes Visibility</div>
<div class="t" style="left:6px;top:665px;font-weight:bold">Orientation Axes</div>
<div class="ln" style="left:6px;top:682px;width:261px;background:#a8a8a8"></div>
<div class="chk" style="left:6px;top:691px"></div><div class="t" style="left:25px;top:690px">Orientation Axes Visibility</div>
<svg class="ic" style="left:8px;top:693px" width="10" height="10" viewBox="0 0 10 10"><path d="M1.2 4.6L4 8.8L8.8 0.8" stroke="#111" stroke-width="1.7" fill="none"/></svg>
<div class="ln" style="left:6px;top:712px;width:261px;background:#a8a8a8"></div>
<div class="chk" style="left:6px;top:725px"></div><div class="t" style="left:25px;top:724px">Hidden Line Removal</div>
<div class="chk" style="left:6px;top:748px"></div><div class="t" style="left:25px;top:747px">Camera Parallel Projection</div>
<div class="abs" style="left:0;top:761px;width:290px;height:36px;background:#efefef"></div>
<div class="abs" style="left:295px;top:196px;width:1px;height:574px;background:#b4b4b4"></div>
<div class="ln" style="left:295px;top:196px;width:853px;background:#b9b9b9"></div>
<div class="abs" style="left:407px;top:172px;width:31px;height:24px;background:linear-gradient(#e9e9e9,#dedede);border:1px solid #b5b5b5;border-bottom:none;border-radius:3px 3px 0 0"></div><div class="t" style="left:419px;top:177px">+</div>
<div class="abs" style="left:295px;top:170px;width:113px;height:27px;background:linear-gradient(#fcfcfc,#f4f4f4 70%,#efefef);border:1px solid #b5b5b5;border-bottom:none;border-radius:3px 3px 0 0"></div>
<svg class="ic" style="left:307px;top:176px" width="16" height="16" viewBox="0 0 16 16"><rect x="0.75" y="0.75" width="14.5" height="14.5" fill="#f8f8f8" stroke="#232323" stroke-width="1.5"/><rect x="0" y="0" width="16" height="4" fill="#2a2a2a"/></svg>
<div class="t" style="left:327px;top:176px">Layout #1</div>
<svg class="ic" style="left:383px;top:179px" width="11" height="11" viewBox="0 0 11 11"><rect x="0.5" y="0.5" width="10" height="10" rx="2.6" fill="#f6f6f6" stroke="#69645f"/><path d="M2.9 2.9L8.1 8.1M8.1 2.9L2.9 8.1" stroke="#57524d" stroke-width="1.9"/></svg>
<svg class="ic" style="left:302px;top:202px" width="16" height="16" viewBox="0 0 16 16" ><path d="M4.6 1H10.6L11.4 2.4H14Q15.4 2.4 15.4 3.8V9.8Q15.4 11.2 14 11.2H1.8Q0.4 11.2 0.4 9.8V3.8Q0.4 2.4 1.8 2.4H3.8Z" fill="#dedede" stroke="#cdcdcd" stroke-width="0.8"/><circle cx="7.8" cy="6.6" r="3.6" fill="#cfcfcf"/><circle cx="7.8" cy="6.6" r="2.6" fill="#ebebeb"/><path d="M0.6 12.6L3.4 7.4L4.6 9.4C8 7.4 11.6 9.2 11 12.8C10.7 14.6 9.6 16 8.2 16.6C8.8 14.8 8.6 13.2 7.2 12.6C6.6 12.4 6 12.6 5.6 12.8L6.8 15Z" fill="#a9a9a9"/></svg>
<svg class="ic" style="left:328px;top:202px" width="16" height="16" viewBox="0 0 16 16" ><path d="M4.6 1H10.6L11.4 2.4H14Q15.4 2.4 15.4 3.8V9.8Q15.4 11.2 14 11.2H1.8Q0.4 11.2 0.4 9.8V3.8Q0.4 2.4 1.8 2.4H3.8Z" fill="#dedede" stroke="#cdcdcd" stroke-width="0.8"/><circle cx="7.8" cy="6.6" r="3.6" fill="#cfcfcf"/><circle cx="7.8" cy="6.6" r="2.6" fill="#ebebeb"/><path d="M15.4 12.6L12.6 7.4L11.4 9.4C8 7.4 4.4 9.2 5 12.8C5.3 14.6 6.4 16 7.8 16.6C7.2 14.8 7.4 13.2 8.8 12.6C9.4 12.4 10 12.6 10.4 12.8L9.2 15Z" fill="#d2d2d2" stroke="#bdbdbd" stroke-width="0.5"/></svg>
<svg class="ic" style="left:360px;top:202px" width="16" height="16" viewBox="0 0 16 16" ><g transform="translate(0 1.4) scale(1 1.0)"><path d="M2.4 2.8H4.6L5.4 1.8H10.6L11.4 2.8H13.6Q14.8 2.8 14.8 4V10.4Q14.8 11.6 13.6 11.6H2.4Q1.2 11.6 1.2 10.4V4Q1.2 2.8 2.4 2.8Z" fill="#c6c6c6" stroke="#9c9c9c" stroke-width="0.8"/><circle cx="8.2" cy="7.2" r="3.5" fill="#a4a4a4"/><circle cx="8.2" cy="7.2" r="2.6" fill="#cde4f8"/><circle cx="7.6" cy="6.6" r="1" fill="#f3f9fe"/><circle cx="2.6" cy="4.4" r="0.7" fill="#e0392f"/></g><path d="M-0.6 2.6V1Q-0.6 -0.6 1 -0.6H2.4M13.6 -0.6H15Q16.6 -0.6 16.6 1V2.6M16.6 13.4V15Q16.6 16.6 15 16.6H13.6M2.4 16.6H1Q-0.6 16.6 -0.6 15V13.4" fill="none" stroke="#7c7c7c" stroke-width="0.9"/></svg>
<svg class="ic" style="left:392px;top:202px" width="16" height="16" viewBox="0 0 16 16" ><text x="8" y="11.9" text-anchor="middle" font-family="Liberation Sans,sans-serif" font-weight="bold" font-size="10.4" fill="#6b6b55">3D</text></svg>
<svg class="ic" style="left:418px;top:202px" width="16" height="16" viewBox="0 0 16 16" ><g transform="translate(0.4 0)"><path d="M4.2 0.4H9.8L10.6 1.8H13Q14.4 1.8 14.4 3.2V10Q14.4 11.4 13 11.4H1.4Q0 11.4 0 10V3.2Q0 1.8 1.4 1.8H3.4Z" fill="#c6c6c6" stroke="#9c9c9c" stroke-width="0.8"/><circle cx="1.6" cy="3.4" r="0.7" fill="#e58a84"/><circle cx="7.2" cy="6.4" r="3.7" fill="#a4a4a4"/><circle cx="7.2" cy="6.4" r="2.8" fill="#cde4f8"/><circle cx="6.6" cy="5.8" r="1.1" fill="#f3f9fe"/><path d="M7.6 8.2L9.4 6.6L14.6 12.4L14.9 15L12.6 14Z" fill="#e4b32c" stroke="#7d6a30" stroke-width="0.6"/><path d="M13.4 14.4L14.9 15.2L14.7 13.2Z" fill="#fff" stroke="#555" stroke-width="0.4"/></g></svg>
<svg class="ic" style="left:450px;top:202px" width="16" height="16" viewBox="0 0 16 16" ><rect x="0.5" y="0.5" width="15" height="15" fill="none" stroke="#7e7e7e" stroke-width="0.9" stroke-dasharray="2.6 1.8" stroke-dashoffset="1.3"/><path d="M6.6 4H9.4V6.6H12V9.4H9.4V12H6.6V9.4H4V6.6H6.6Z" fill="#a6d48b" stroke="#7c9c66" stroke-width="0.8"/></svg>
<svg class="ic" style="left:476px;top:202px" width="16" height="16" viewBox="0 0 16 16" ><rect x="0.5" y="0.5" width="15" height="15" fill="none" stroke="#7e7e7e" stroke-width="0.9" stroke-dasharray="2.6 1.8" stroke-dashoffset="1.3"/><rect x="3.8" y="6.7" width="8.6" height="2.7" rx="0.5" fill="#e01b24" stroke="#b5423a" stroke-width="0.5"/></svg>
<svg class="ic" style="left:502px;top:202px" width="16" height="16" viewBox="0 0 16 16" ><rect x="0.5" y="0.5" width="15" height="15" fill="none" stroke="#7e7e7e" stroke-width="0.9" stroke-dasharray="2.6 1.8" stroke-dashoffset="1.3"/><path d="M4.9 2.4H6.9V4.4H8.9V6.4H6.9V8.4H4.9V6.4H2.9V4.4H4.9Z" fill="#a6d48b" stroke="#7c9c66" stroke-width="0.7"/><rect x="2.4" y="10" width="7" height="2.4" rx="0.4" fill="#e01b24" stroke="#b5423a" stroke-width="0.4"/><path d="M10.6 10.4l4.2 1.1l-1.2 1l2.4 2.5l-0.9 0.9l-2.4 -2.5l-1 1.2z" fill="#5c5c5c"/></svg>
<svg class="ic" style="left:534px;top:202px" width="16" height="16" viewBox="0 0 16 16" ><rect x="0.5" y="0.5" width="15" height="15" fill="none" stroke="#7e7e7e" stroke-width="0.9" stroke-dasharray="2.6 1.8" stroke-dashoffset="1.3"/><path d="M8 2.8L13.4 12H2.9Z" fill="#a6d48b" stroke="#84a06e" stroke-width="0.7"/><path d="M10.8 10.6l4.2 1.1l-1.2 1l2.4 2.5l-0.9 0.9l-2.4 -2.5l-1 1.2z" fill="#5c5c5c"/></svg>
<svg class="ic" style="left:560px;top:202px" width="16" height="16" viewBox="0 0 16 16" ><rect x="0.5" y="0.5" width="15" height="15" fill="none" stroke="#7e7e7e" stroke-width="0.9" stroke-dasharray="2.6 1.8" stroke-dashoffset="1.3"/><path d="M8 2.6L13 11.8H3.2Z" fill="none" stroke="#c9c9c9" stroke-width="0.8"/><circle cx="8" cy="2.6" r="1.2" fill="#c8402e"/><circle cx="3.3" cy="11.7" r="1.2" fill="#c8402e"/><path d="M10.8 10.6l4.2 1.1l-1.2 1l2.4 2.5l-0.9 0.9l-2.4 -2.5l-1 1.2z" fill="#5c5c5c"/></svg>
<svg class="ic" style="left:586px;top:202px" width="16" height="16" viewBox="0 0 16 16" ><path d="M0 0H15.6V12.8H0Z" fill="none" stroke="#a2a2a2" stroke-width="0.8" stroke-dasharray="2 2.2"/><path d="M2.5 5.2L9 0.7L15.5 2.5V9.2L5.6 9.8L2.5 9.1Z" fill="#a6d48b" stroke="#78a060" stroke-width="0.8" stroke-linejoin="round"/><path d="M2.5 5.2L5.8 6.2L15.5 2.5M5.8 6.2V9.8" fill="none" stroke="#78a060" stroke-width="0.7"/><path d="M9.4 3.4V8.4" stroke="#8fbf78" stroke-width="0.6" stroke-dasharray="1 1"/><path d="M8.2 11.4l4.2 1.1l-1.2 1l2.4 2.5l-0.9 0.9l-2.4 -2.5l-1 1.2z" fill="#5c5c5c"/></svg>
<svg class="ic" style="left:612px;top:202px" width="16" height="16" viewBox="0 0 16 16" ><path d="M0 0H15.6V12.8H0Z" fill="none" stroke="#c4c4c4" stroke-width="0.8" stroke-dasharray="1.8 2.2"/><path d="M2.5 5.2L9 0.7L15.5 2.5V9.2L5.6 9.8L2.5 9.1ZM2.5 5.2L5.8 6.2L15.5 2.5M5.8 6.2V9.8" fill="none" stroke="#cfcfcf" stroke-width="0.7" stroke-dasharray="1.5 1"/><circle cx="9" cy="0.7" r="0.9" fill="#e8584c"/><circle cx="15.4" cy="2.5" r="0.9" fill="#e8584c"/><circle cx="15.4" cy="9" r="0.9" fill="#e8584c"/><circle cx="2.6" cy="5.2" r="0.9" fill="#e8584c"/><circle cx="2.6" cy="9" r="0.9" fill="#e8584c"/><circle cx="5.8" cy="6.2" r="0.9" fill="#e8584c"/><circle cx="5.8" cy="9.8" r="0.9" fill="#e8584c"/><path d="M8.2 11.4l4.2 1.1l-1.2 1l2.4 2.5l-0.9 0.9l-2.4 -2.5l-1 1.2z" fill="#5c5c5c"/></svg>
<svg class="ic" style="left:638px;top:202px" width="16" height="16" viewBox="0 0 16 16" ><path d="M0.4 0.4L15 0.6L10.6 6.6L17 11L11.6 16L6.4 11.4L0.6 11.8Z" fill="none" stroke="#9a9a9a" stroke-width="0.8" stroke-dasharray="2.4 2"/><path d="M1.6 8.4L7 4.6V11.6Z" fill="#a6d48b" stroke="#84a06e" stroke-width="0.7"/></svg>
<svg class="ic" style="left:664px;top:202px" width="16" height="16" viewBox="0 0 16 16" ><path d="M0.4 0.4L15 0.6L10.6 6.6L17 11L11.6 16L6.4 11.4L0.6 11.8Z" fill="none" stroke="#9a9a9a" stroke-width="0.8" stroke-dasharray="2.4 2"/><circle cx="3.4" cy="3.8" r="1.15" fill="#c8402e"/><circle cx="10.4" cy="3.6" r="1.15" fill="#c8402e"/><circle cx="7" cy="6.4" r="1.15" fill="#c8402e"/><circle cx="3.2" cy="8.6" r="1.15" fill="#c8402e"/><circle cx="7.6" cy="10.6" r="1.15" fill="#c8402e"/><circle cx="11.4" cy="12.2" r="1.15" fill="#c8402e"/></svg>
<svg class="ic" style="left:690px;top:202px" width="16" height="16" viewBox="0 0 16 16" ><rect x="0.5" y="0.5" width="15" height="15" fill="none" stroke="#7e7e7e" stroke-width="0.9" stroke-dasharray="2.6 1.8" stroke-dashoffset="1.3"/><circle cx="4.5" cy="4.7" r="2.2" fill="#2d96d8" stroke="#4a7ea6" stroke-width="0.4"/><circle cx="4.5" cy="11.6" r="2.2" fill="#2d96d8" stroke="#4a7ea6" stroke-width="0.4"/><path d="M12.6 10.6L15.8 15" stroke="#6a6a6a" stroke-width="1.6" stroke-linecap="round"/><circle cx="11" cy="8.8" r="2.7" fill="#a6d48b" stroke="#7c9c66" stroke-width="0.8"/></svg>
<svg class="ic" style="left:716px;top:202px" width="16" height="16" viewBox="0 0 16 16" ><path d="M1 4.6L5 0.8H14.6V11.4L10.4 15.4H1Z" fill="#cdcdcd" stroke="#b2b2b2" stroke-width="0.8"/><path d="M1 4.6H10.4V15.4M10.4 4.6L14.6 0.8" fill="none" stroke="#b2b2b2" stroke-width="0.8"/><path d="M10.8 9.4L15.6 10.6L14.2 11.6L16.4 14L15.4 15L13.2 12.6L12 14Z" fill="#a2a2a2"/></svg>
<svg class="ic" style="left:742px;top:202px" width="16" height="16" viewBox="0 0 16 16" ><circle cx="7.7" cy="7.6" r="2.3" fill="#e1e1e1" stroke="#bdbdbd" stroke-width="0.8"/><path d="M10.4 10.2L15 11.4L13.7 12.5L16 15L15 16L12.6 13.5L11.6 14.8Z" fill="#ababab"/></svg>
<svg class="ic" style="left:768px;top:202px" width="16" height="16" viewBox="0 0 16 16" ><path d="M8.1 2.9L12.9 11.4H3.2Z" fill="#a6d48b" stroke="#84a06e" stroke-width="0.7"/><path d="M11.6 10.4l4.2 1.1l-1.2 1l2.4 2.5l-0.9 0.9l-2.4 -2.5l-1 1.2z" fill="#5c5c5c"/></svg>
<svg class="ic" style="left:794px;top:202px" width="16" height="16" viewBox="0 0 16 16" ><path d="M8.2 2.6L13 11.4H3.3Z" fill="none" stroke="#cfcfcf" stroke-width="0.8"/><circle cx="8.2" cy="2.6" r="1.2" fill="#c8402e"/><circle cx="3.3" cy="11.4" r="1.2" fill="#c8402e"/><path d="M11.6 10.4l4.2 1.1l-1.2 1l2.4 2.5l-0.9 0.9l-2.4 -2.5l-1 1.2z" fill="#5c5c5c"/></svg>
<svg class="ic" style="left:820px;top:202px" width="16" height="16" viewBox="0 0 16 16" ><path d="M4.9 7.2L9.3 14.2H0.4Z" fill="#a6d48b" stroke="#84a06e" stroke-width="0.7"/><text x="9.4" y="11.4" font-family="Liberation Sans,sans-serif" font-size="14.6" fill="#6b6b55">?</text></svg>
<svg class="ic" style="left:846px;top:202px" width="16" height="16" viewBox="0 0 16 16" ><circle cx="4.5" cy="12.2" r="2.3" fill="#e0392f"/><text x="7.2" y="11.4" font-family="Liberation Sans,sans-serif" font-size="14.6" fill="#6b6b55">?</text></svg>
<svg class="ic" style="left:872px;top:202px" width="16" height="16" viewBox="0 0 16 16" ><path d="M5.6 0.9H10.2V5.6H14.9V10.2H10.2V14.9H5.6V10.2H0.9V5.6H5.6Z" fill="#c3c3c3"/></svg>
<div class="sep" style="left:353px;top:204px;height:13px"></div>
<div class="sep" style="left:385px;top:204px;height:13px"></div>
<div class="sep" style="left:442px;top:204px;height:13px"></div>
<div class="sep" style="left:526px;top:204px;height:13px"></div>
<svg class="ic" style="left:919.5px;top:206.5px" width="8" height="7" viewBox="0 0 8 7"><path d="M0.7 0.5L3.3 3.5L0.7 6.5M4.5 0.5L7.1 3.5L4.5 6.5" fill="none" stroke="#2e2e2e" stroke-width="1.1"/></svg>
<div class="t" style="left:954px;top:201px;font-weight:bold;text-decoration:underline;text-underline-offset:2px">RenderView1</div>
<div class="btn" style="left:1040px;top:198px;width:26px;height:25px"></div>
<svg class="ic" style="left:1045px;top:202.5px" width="16" height="16" viewBox="0 0 16 16" ><rect x="1" y="1" width="14" height="13.6" fill="#cdd5ed" stroke="#a2a2a2" stroke-width="1"/><path d="M8 1V14.6" stroke="#a2a2a2" stroke-width="1.2"/></svg>
<div class="btn" style="left:1067px;top:198px;width:26px;height:25px"></div>
<svg class="ic" style="left:1072px;top:202.5px" width="16" height="16" viewBox="0 0 16 16" ><rect x="1" y="1" width="14" height="13.6" fill="#cdd5ed" stroke="#a2a2a2" stroke-width="1"/><path d="M1 7.8H15" stroke="#a2a2a2" stroke-width="1.2"/></svg>
<div class="btn" style="left:1094px;top:198px;width:26px;height:25px"></div>
<svg class="ic" style="left:1099px;top:202.5px" width="16" height="16" viewBox="0 0 16 16" ><rect x="-0.4" y="-0.2" width="17" height="16.6" fill="none" stroke="#2b2b2b" stroke-width="1.6"/><rect x="-1.2" y="-1" width="18.6" height="4.4" fill="#303030"/></svg>
<div class="btn" style="left:1121px;top:198px;width:26px;height:25px"></div>
<svg class="ic" style="left:1126px;top:202.5px" width="16" height="16" viewBox="0 0 16 16" ><rect x="2.6" y="2.8" width="10.6" height="10.6" rx="2.6" fill="#f6f6f6" stroke="#69645f" stroke-width="1"/><path d="M5.2 5.4L10.6 10.8M10.6 5.4L5.2 10.8" stroke="#57524d" stroke-width="1.9"/></svg>
<div class="abs" style="left:296px;top:223px;width:852px;height:547px;background:#fafaf2"></div>
<div class="abs" style="left:297px;top:224px;width:850px;height:545px;background:#52576e;border:2px solid #0000ff;box-shadow:inset 0 0 0 1px #fbfbf0"></div>
<svg class="ic" style="left:355px;top:655px" width="60" height="52" viewBox="0 0 60 52">
<line x1="12.5" y1="43" x2="12.5" y2="13.5" stroke="#d8d820" stroke-width="1.2"/>
<path d="M12.5 6L9.8 13.4H15.2Z" fill="#e6e626"/><path d="M9.9 13H15.1V14.1H9.9Z" fill="#2a2a12"/>
<line x1="16" y1="43.4" x2="21" y2="43.4" stroke="#f0f0f0" stroke-width="1.1"/>
<line x1="21" y1="43.4" x2="43" y2="43.4" stroke="#d81818" stroke-width="1.2"/>
<path d="M50.4 43.4L42.6 41V45.8Z" fill="#ee1414"/><path d="M42.2 41H43.3V45.8H42.2Z" fill="#5a0a0a"/>
<circle cx="12.5" cy="43.4" r="3.5" fill="#0a5f0a"/>
<text x="14.3" y="13.9" font-family="Liberation Sans,sans-serif" font-size="10.6" fill="#fff">Y</text>
<text x="15" y="42" font-family="Liberation Sans,sans-serif" font-size="10" fill="#fff">Z</text>
<text x="44.7" y="43.8" font-family="Liberation Sans,sans-serif" font-size="10.2" fill="#fff">X</text>
</svg>
<div class="t" style="left:3px;top:776px">Can't Undo</div>
<div class="btn" style="left:372px;top:775px;width:20px;height:19px;background:linear-gradient(#fafafa,#efefef)"></div>
<svg class="ic" style="left:377px;top:780px" width="9" height="9" viewBox="0 0 9 9"><path d="M1.7 1.7L7.3 7.3M7.3 1.7L1.7 7.3" stroke="#9c9c9c" stroke-width="2.5" stroke-linecap="round"/></svg>
<div class="abs" style="left:394px;top:774px;width:351px;height:21px;border:1px solid #b3b3b3;border-right-color:#e0e0e0;border-bottom-color:#fafafa;background:#efefef"></div>
<div class="abs" style="left:752px;top:774px;width:373px;height:21px;border:1px solid #a9a9a9;border-radius:3px;background:#fff"></div>
<div class="abs" style="left:753px;top:775px;width:28px;height:19px;background:linear-gradient(#cdeac4,#b4dca8);border-right:1px solid #9fbf96;border-radius:2px 0 0 2px"></div>
<div class="t" style="left:752px;width:373px;text-align:center;top:777px">bastion: 1.2 GiB/15.4 GiB 7.9%</div>
<svg class="ic" style="left:1136px;top:784px" width="12" height="12" fill="#a8a8a8"><rect x="9" y="9" width="1.4" height="1.4"/><rect x="6" y="9" width="1.4" height="1.4"/><rect x="3" y="9" width="1.4" height="1.4"/><rect x="0" y="9" width="1.4" height="1.4"/><rect x="9" y="6" width="1.4" height="1.4"/><rect x="6" y="6" width="1.4" height="1.4"/><rect x="3" y="6" width="1.4" height="1.4"/><rect x="9" y="3" width="1.4" height="1.4"/><rect x="6" y="3" width="1.4" height="1.4"/><rect x="9" y="0" width="1.4" height="1.4"/></svg>
</div></body></html>
